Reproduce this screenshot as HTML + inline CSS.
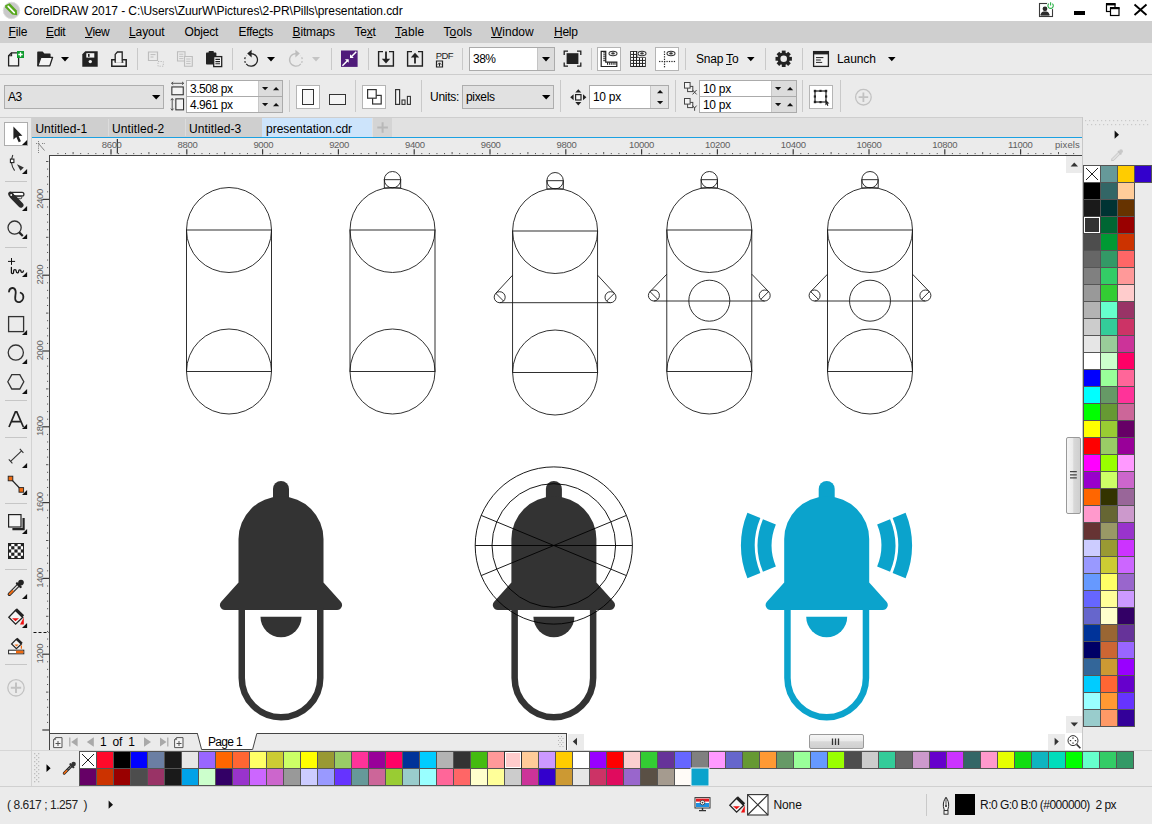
<!DOCTYPE html>
<html><head><meta charset="utf-8"><title>CorelDRAW</title>
<style>
html,body{margin:0;padding:0;}
body{width:1152px;height:824px;overflow:hidden;background:#ebebeb;font-family:"Liberation Sans", sans-serif;position:relative;}
.b{position:absolute;box-sizing:border-box;display:block;}
.t{position:absolute;white-space:pre;font-family:"Liberation Sans", sans-serif;}
u{text-decoration:underline;text-underline-offset:1px;}
</style></head><body>
<div class="b" style="left:0px;top:0px;width:1152px;height:21px;background:#ffffff;"></div>
<div class="b" style="left:0px;top:21px;width:1152px;height:22px;background:#cfcfcf;"></div>
<div class="b" style="left:0px;top:43px;width:1152px;height:31px;background:#ebebeb;"></div>
<div class="b" style="left:0px;top:74px;width:1152px;height:1px;background:#cdcdcd;"></div>
<div class="b" style="left:0px;top:75px;width:1152px;height:42px;background:#ebebeb;"></div>
<div class="b" style="left:0px;top:117px;width:1152px;height:1px;background:#cecece;"></div>
<div class="b" style="left:0px;top:118px;width:32px;height:706px;background:#ebebeb;"></div>
<div class="b" style="left:32px;top:118px;width:1050px;height:19px;background:#e1e1e1;"></div>
<div class="b" style="left:32px;top:137px;width:1050px;height:1.3px;background:#1ba1e2;"></div>
<div class="b" style="left:32px;top:138.3px;width:1050px;height:17px;background:#ebebeb;"></div>
<div class="b" style="left:32px;top:155px;width:18px;height:578px;background:#ebebeb;"></div>
<div class="b" style="left:49px;top:155px;width:1017px;height:578px;background:#ffffff;border-left:1px solid #444;border-top:1px solid #444;"></div>
<div class="b" style="left:1066px;top:155px;width:16px;height:595px;background:#ffffff;border-top:1px solid #444;"></div>
<div class="b" style="left:50px;top:733px;width:1016px;height:17px;background:#ffffff;"></div>
<div class="b" style="left:1082px;top:117px;width:70px;height:634px;background:#ebebeb;border-left:1px solid #c8c8c8;"></div>
<div class="b" style="left:0px;top:750px;width:1152px;height:1px;background:#d6d6d6;"></div>
<div class="b" style="left:0px;top:751px;width:1152px;height:35px;background:#ebebeb;"></div>
<div class="b" style="left:0px;top:786px;width:1152px;height:1px;background:#d0d0d0;"></div>
<div class="b" style="left:0px;top:787px;width:1152px;height:37px;background:#ebebeb;"></div>
<svg class="b" style="left:2px;top:1px;" width="19" height="19" viewBox="0 0 19 19"><circle cx="9.5" cy="9.5" r="8.2" fill="#c9c9c9"/><circle cx="9.5" cy="9.5" r="8.2" fill="none" stroke="#dcdcdc" stroke-width="1"/><path d="M3.2 4.2L7.8 2.2L14.8 9.5L15.2 14.2L10.2 13.6L3.2 6.6Z" fill="#57a81c"/><path d="M6.2 5.4L12.3 11.6" stroke="#fff" stroke-width="1.6" stroke-linecap="round"/></svg>
<span id="t1" class="t" style="left:24px;top:3px;font-size:12px;line-height:16px;color:#000;letter-spacing:-0.074px;">CorelDRAW 2017 - C:\Users\ZuurW\Pictures\2-PR\Pills\presentation.cdr</span>
<svg class="b" style="left:1038px;top:2px;" width="17" height="16" viewBox="0 0 17 16"><rect x="1.5" y="1.5" width="13" height="13" fill="#fff" stroke="#3a3a3a" stroke-width="1.1"/><circle cx="7" cy="6.8" r="2.4" fill="#2b2b2b"/><path d="M2.6 13.2C3 9.8 5 9.6 7 9.6S11 9.8 11.4 13.2Z" fill="#2b2b2b"/><rect x="2.6" y="12.2" width="8.8" height="1.3" fill="#2b2b2b"/><circle cx="12.6" cy="3.4" r="3.9" fill="#fff"/><path d="M10.9 1.6A2.7 2.7 0 1 0 14.3 1.6" fill="none" stroke="#2db34a" stroke-width="1.1"/><path d="M12.6 0.2V3.4" stroke="#2db34a" stroke-width="1.1"/></svg>
<div class="b" style="left:1074px;top:11px;width:11px;height:4px;background:#000;"></div>
<svg class="b" style="left:1105px;top:2px;" width="16" height="16" viewBox="0 0 16 16"><rect x="1.5" y="2" width="8.5" height="7.5" fill="#fff" stroke="#000" stroke-width="1.2"/><rect x="1" y="1" width="9.5" height="2.4" fill="#000"/><rect x="5.5" y="6" width="8.5" height="7.5" fill="#fff" stroke="#000" stroke-width="1.2"/><rect x="5" y="5" width="9.5" height="2.2" fill="#000"/></svg>
<svg class="b" style="left:1133px;top:3px;" width="16" height="14" viewBox="0 0 16 14"><path d="M1.5 1.5L13.5 12M13.5 1.5L1.5 12" stroke="#000" stroke-width="1.9" fill="none"/></svg>
<span id="t2" class="t" style="left:8.5px;top:24px;font-size:12px;line-height:16px;color:#000;letter-spacing:-0.125px;"><u>F</u>ile</span>
<span id="t3" class="t" style="left:46px;top:24px;font-size:12px;line-height:16px;color:#000;letter-spacing:-0.375px;"><u>E</u>dit</span>
<span id="t4" class="t" style="left:85px;top:24px;font-size:12px;line-height:16px;color:#000;letter-spacing:-0.375px;"><u>V</u>iew</span>
<span id="t5" class="t" style="left:129px;top:24px;font-size:12px;line-height:16px;color:#000;letter-spacing:-0.083px;"><u>L</u>ayout</span>
<span id="t6" class="t" style="left:184.5px;top:24px;font-size:12px;line-height:16px;color:#000;letter-spacing:-0.167px;">Ob<u>j</u>ect</span>
<span id="t7" class="t" style="left:238.5px;top:24px;font-size:12px;line-height:16px;color:#000;letter-spacing:-0.286px;">Effe<u>c</u>ts</span>
<span id="t8" class="t" style="left:292.5px;top:24px;font-size:12px;line-height:16px;color:#000;letter-spacing:-0.143px;"><u>B</u>itmaps</span>
<span id="t9" class="t" style="left:354.5px;top:24px;font-size:12px;line-height:16px;color:#000;letter-spacing:-0.25px;">Te<u>x</u>t</span>
<span id="t10" class="t" style="left:395px;top:24px;font-size:12px;line-height:16px;color:#000;letter-spacing:0.1px;"><u>T</u>able</span>
<span id="t11" class="t" style="left:443.5px;top:24px;font-size:12px;line-height:16px;color:#000;letter-spacing:0.1px;">T<u>o</u>ols</span>
<span id="t12" class="t" style="left:491px;top:24px;font-size:12px;line-height:16px;color:#000;letter-spacing:0.0px;"><u>W</u>indow</span>
<span id="t13" class="t" style="left:554px;top:24px;font-size:12px;line-height:16px;color:#000;letter-spacing:-0.25px;"><u>H</u>elp</span>
<svg class="b" style="left:7px;top:50px;" width="19" height="18" viewBox="0 0 19 18"><path d="M4.6 2.8H11.6V15.9H1.6V5.8Z" fill="#f4f4f4" stroke="#222" stroke-width="1.3" stroke-linejoin="round"/><path d="M4.6 2.8V5.8H1.6" fill="none" stroke="#222" stroke-width="1.1"/><rect x="10" y="1" width="7" height="7" fill="#0f9b2e"/><path d="M13.5 2.3V6.7M11.3 4.5H15.7" stroke="#fff" stroke-width="1.3"/></svg>
<svg class="b" style="left:36px;top:50px;" width="19" height="18" viewBox="0 0 19 18"><path d="M1.2 16V2.6C1.2 2 1.6 1.6 2.2 1.6H6.6L8.4 3.6H13.6C14.2 3.6 14.6 4 14.6 4.6V7H4.8L1.8 16Z" fill="#222"/><path d="M4.9 7.3H16.6L13.8 15.9H1.9Z" fill="#f4f4f4" stroke="#222" stroke-width="1.3" stroke-linejoin="round"/></svg>
<svg class="b" style="left:61.2px;top:57px;" width="9" height="5.4" viewBox="0 0 9 5.4"><path d="M0 0H8L4.0 4.4Z" fill="#000"/></svg>
<svg class="b" style="left:82px;top:51px;" width="17" height="16" viewBox="0 0 17 16"><path d="M0.3 3.3L3.3 0.3H15.7V15.7H0.3Z" fill="#222"/><rect x="4.3" y="2.2" width="8" height="4.4" fill="#f4f4f4"/><rect x="6" y="3" width="1.6" height="2.8" fill="#222"/><circle cx="8.3" cy="10.6" r="1.7" fill="#f4f4f4"/></svg>
<svg class="b" style="left:110px;top:51px;" width="18" height="16" viewBox="0 0 18 16"><path d="M1.8 8.8H16.2V15.2H1.8Z" fill="#f4f4f4" stroke="#222" stroke-width="1.5"/><path d="M4.6 11.2H13.4" stroke="#222" stroke-width="1.2"/><path d="M5.2 11V3.4L7.4 1H12.2V11" fill="#f4f4f4" stroke="#222" stroke-width="1.3"/><path d="M5.9 10.4H11.5V11.8H5.9Z" fill="#f4f4f4"/></svg>
<div class="b" style="left:137px;top:48px;width:1px;height:22px;background:#c9c9c9;"></div>
<svg class="b" style="left:147px;top:51px;" width="18" height="16" viewBox="0 0 18 16"><path d="M1.5 1H10.5V9.5H1.5Z" fill="none" stroke="#bdbdbd" stroke-width="1.2"/><path d="M3.5 3.6H8.5M3.5 6H6.5" stroke="#bdbdbd" stroke-width="1"/><path d="M11 10.5H16.3V15.2H11Z" fill="none" stroke="#bdbdbd" stroke-width="1" stroke-dasharray="1.3 1.2"/></svg>
<svg class="b" style="left:176px;top:51px;" width="18" height="16" viewBox="0 0 18 16"><path d="M1.5 0.8H9V10H1.5Z" fill="#ebebeb" stroke="#bdbdbd" stroke-width="1.1"/><path d="M3.2 3.2H7.4M3.2 5.4H7.4M3.2 7.6H7.4" stroke="#bdbdbd" stroke-width="0.9"/><path d="M8.5 5.5H16.3V15.3H8.5Z" fill="#ebebeb" stroke="#bdbdbd" stroke-width="1.1"/><path d="M10.2 8H14.6M10.2 10.3H14.6M10.2 12.6H14.6" stroke="#bdbdbd" stroke-width="0.9"/></svg>
<svg class="b" style="left:205px;top:50px;" width="18" height="18" viewBox="0 0 18 18"><rect x="1" y="2.6" width="10.4" height="12" rx="0.8" fill="#222"/><rect x="3.6" y="1" width="5.2" height="3" rx="0.8" fill="#222"/><rect x="8.7" y="6.6" width="8" height="10" fill="#f4f4f4" stroke="#222" stroke-width="1.3"/><path d="M10.4 9.4H15M10.4 11.6H15M10.4 13.8H15" stroke="#222" stroke-width="1.1"/></svg>
<div class="b" style="left:232px;top:48px;width:1px;height:22px;background:#c9c9c9;"></div>
<svg class="b" style="left:241px;top:49px;" width="20" height="21" viewBox="0 0 20 21"><path d="M10 4.6A6.3 6.3 0 1 1 5.2 14.8" fill="none" stroke="#222" stroke-width="1.25"/><path d="M4.4 13.8A6.3 6.3 0 0 1 5.5 6.6" fill="none" stroke="#222" stroke-width="1.25" stroke-dasharray="1.8 1.9"/><path d="M10.6 0.8V8.4L6.2 4.6Z" fill="#222"/></svg>
<svg class="b" style="left:267px;top:57px;" width="9" height="5.4" viewBox="0 0 9 5.4"><path d="M0 0H8L4.0 4.4Z" fill="#000"/></svg>
<svg class="b" style="left:286px;top:49px;" width="20" height="21" viewBox="0 0 20 21"><path d="M10 4.6A6.3 6.3 0 1 0 14.8 14.8" fill="none" stroke="#bdbdbd" stroke-width="1.25"/><path d="M15.6 13.8A6.3 6.3 0 0 0 14.5 6.6" fill="none" stroke="#bdbdbd" stroke-width="1.25" stroke-dasharray="1.8 1.9"/><path d="M9.4 0.8V8.4L13.8 4.6Z" fill="#bdbdbd"/></svg>
<svg class="b" style="left:312.4px;top:57px;" width="9" height="5.4" viewBox="0 0 9 5.4"><path d="M0 0H8L4.0 4.4Z" fill="#c4c4c4"/></svg>
<div class="b" style="left:331px;top:48px;width:1px;height:22px;background:#c9c9c9;"></div>
<svg class="b" style="left:341px;top:50px;" width="17" height="17" viewBox="0 0 17 17"><rect x="0" y="0.5" width="16.6" height="16.4" fill="#4f1b7a"/><path d="M15.3 1.8L9.8 7.3M1.4 15.7L6.9 10.2" stroke="#fff" stroke-width="1.5"/><path d="M9 4.2V8H12.8ZM7.7 12.8V9.2H3.9Z" fill="#fff"/></svg>
<div class="b" style="left:368px;top:48px;width:1px;height:22px;background:#c9c9c9;"></div>
<svg class="b" style="left:377px;top:50px;" width="18" height="18" viewBox="0 0 18 18"><path d="M6 1.6H1.6V16H16.4V1.6H12" fill="none" stroke="#222" stroke-width="1.4"/><path d="M9 1.6V11" stroke="#222" stroke-width="1.8"/><path d="M4.8 8.8H13.2L9 13.6Z" fill="#222"/></svg>
<svg class="b" style="left:406px;top:50px;" width="18" height="18" viewBox="0 0 18 18"><path d="M6 1.6H1.6V16H16.4V1.6H12" fill="none" stroke="#222" stroke-width="1.4"/><path d="M9 13.6V5.4" stroke="#222" stroke-width="1.8"/><path d="M4.8 7.6H13.2L9 2.8Z" fill="#222"/></svg>
<span id="t14" class="t" style="left:435.8px;top:48.5px;font-size:9.5px;line-height:13.5px;color:#222;letter-spacing:-0.667px;">PDF</span>
<svg class="b" style="left:435px;top:60px;" width="10" height="8" viewBox="0 0 10 8"><path d="M1.5 1H7.5V7H1.5Z" fill="none" stroke="#222" stroke-width="1.2"/><path d="M4.5 6.4V3.2M2.9 4.6L4.5 2.8L6.1 4.6" stroke="#222" stroke-width="1" fill="none"/></svg>
<div class="b" style="left:462px;top:48px;width:1px;height:22px;background:#c9c9c9;"></div>
<div class="b" style="left:469px;top:47px;width:86px;height:24px;background:#ffffff;border:1px solid #ababab;"></div>
<div class="b" style="left:537px;top:48px;width:17px;height:22px;background:#dcdcdc;border-left:1px solid #c4c4c4;"></div>
<span id="t15" class="t" style="left:473px;top:51px;font-size:12px;line-height:16px;color:#000;letter-spacing:-0.5px;">38%</span>
<svg class="b" style="left:541.6px;top:57px;" width="9" height="5.4" viewBox="0 0 9 5.4"><path d="M0 0H8L4.0 4.4Z" fill="#000"/></svg>
<svg class="b" style="left:563px;top:50px;" width="19" height="18" viewBox="0 0 19 18"><rect x="3.6" y="3.2" width="11.8" height="10.8" fill="#222"/><path d="M1.2 5V1.2H5M14 1.2H17.8V5M17.8 12.4V16.2H14M5 16.2H1.2V12.4" fill="none" stroke="#222" stroke-width="1.3"/></svg>
<div class="b" style="left:591px;top:48px;width:1px;height:22px;background:#c9c9c9;"></div>
<div class="b" style="left:597px;top:47px;width:24px;height:24px;background:#ffffff;border:1px solid #b5b5b5;"></div>
<svg class="b" style="left:598px;top:48px;" width="22" height="22" viewBox="0 0 22 22"><path d="M3.2 3.3H7.75V14.2H18.8V18.5H3.2Z" fill="#fff" stroke="#222" stroke-width="1.2"/><path d="M5.2 4.90H7.7M5.2 6.85H7.7M5.2 8.80H7.7M5.2 10.75H7.7M5.2 12.70H7.7M9.50 14.3V16.8M11.37 14.3V16.8M13.24 14.3V16.8M15.11 14.3V16.8M16.98 14.3V16.8" stroke="#222" stroke-width="1" fill="none"/><ellipse cx="15" cy="5.4" rx="4" ry="2.25" fill="#fff" stroke="#333" stroke-width="1.05"/><ellipse cx="15" cy="5.4" rx="1.7" ry="1.2" fill="#3a3a3a"/></svg>
<svg class="b" style="left:629px;top:48px;" width="20" height="22" viewBox="0 0 20 22"><path d="M1.2 3.1H8.4V9.3H16.8V18.9H1.2Z" fill="#222"/><g fill="#fff"><rect x="2.0" y="3.9" width="2" height="2"/><rect x="5.0" y="3.9" width="2" height="2"/><rect x="2.0" y="6.9" width="2" height="2"/><rect x="5.0" y="6.9" width="2" height="2"/><rect x="2.0" y="9.9" width="2" height="2"/><rect x="5.0" y="9.9" width="2" height="2"/><rect x="8.0" y="9.9" width="2" height="2"/><rect x="11.0" y="9.9" width="2" height="2"/><rect x="14.0" y="9.9" width="2" height="2"/><rect x="2.0" y="12.9" width="2" height="2"/><rect x="5.0" y="12.9" width="2" height="2"/><rect x="8.0" y="12.9" width="2" height="2"/><rect x="11.0" y="12.9" width="2" height="2"/><rect x="14.0" y="12.9" width="2" height="2"/><rect x="2.0" y="15.9" width="2" height="2"/><rect x="5.0" y="15.9" width="2" height="2"/><rect x="8.0" y="15.9" width="2" height="2"/><rect x="11.0" y="15.9" width="2" height="2"/><rect x="14.0" y="15.9" width="2" height="2"/></g><ellipse cx="13" cy="5.4" rx="5.1" ry="3.3" fill="#ebebeb"/><ellipse cx="13" cy="5.4" rx="4" ry="2.25" fill="#fff" stroke="#333" stroke-width="1.05"/><ellipse cx="13" cy="5.4" rx="1.7" ry="1.2" fill="#3a3a3a"/></svg>
<div class="b" style="left:655px;top:47px;width:24px;height:24px;background:#ffffff;border:1px solid #b5b5b5;"></div>
<svg class="b" style="left:656px;top:48px;" width="22" height="22" viewBox="0 0 22 22"><g fill="#222"><rect x="7.9" y="3.30" width="1.2" height="1.25"/><rect x="7.9" y="5.76" width="1.2" height="1.25"/><rect x="7.9" y="8.22" width="1.2" height="1.25"/><rect x="7.9" y="10.68" width="1.2" height="1.25"/><rect x="7.9" y="13.14" width="1.2" height="1.25"/><rect x="7.9" y="15.60" width="1.2" height="1.25"/><rect x="7.9" y="18.06" width="1.2" height="1.25"/><rect x="3.10" y="12.9" width="1.25" height="1.2"/><rect x="5.55" y="12.9" width="1.25" height="1.2"/><rect x="8.00" y="12.9" width="1.25" height="1.2"/><rect x="10.45" y="12.9" width="1.25" height="1.2"/><rect x="12.90" y="12.9" width="1.25" height="1.2"/><rect x="15.35" y="12.9" width="1.25" height="1.2"/><rect x="17.80" y="12.9" width="1.25" height="1.2"/></g><ellipse cx="15" cy="5.4" rx="4" ry="2.25" fill="#fff" stroke="#333" stroke-width="1.05"/><ellipse cx="15" cy="5.4" rx="1.7" ry="1.2" fill="#3a3a3a"/></svg>
<div class="b" style="left:685px;top:48px;width:1px;height:22px;background:#c9c9c9;"></div>
<span id="t16" class="t" style="left:696px;top:51px;font-size:12px;line-height:16px;color:#000;letter-spacing:-0.214px;">Snap <u>T</u>o</span>
<svg class="b" style="left:747px;top:57px;" width="8.6" height="5.2" viewBox="0 0 8.6 5.2"><path d="M0 0H7.6L3.8 4.2Z" fill="#000"/></svg>
<div class="b" style="left:765px;top:48px;width:1px;height:22px;background:#c9c9c9;"></div>
<svg class="b" style="left:774px;top:49px;" width="20" height="20" viewBox="0 0 20 20"><g transform="translate(9.7 9.8)" fill="#222"><rect x="-1.9" y="-8.2" width="3.8" height="4" transform="rotate(0)"/><rect x="-1.9" y="-8.2" width="3.8" height="4" transform="rotate(45)"/><rect x="-1.9" y="-8.2" width="3.8" height="4" transform="rotate(90)"/><rect x="-1.9" y="-8.2" width="3.8" height="4" transform="rotate(135)"/><rect x="-1.9" y="-8.2" width="3.8" height="4" transform="rotate(180)"/><rect x="-1.9" y="-8.2" width="3.8" height="4" transform="rotate(225)"/><rect x="-1.9" y="-8.2" width="3.8" height="4" transform="rotate(270)"/><rect x="-1.9" y="-8.2" width="3.8" height="4" transform="rotate(315)"/><circle r="6.2"/><circle r="3.3" fill="#ebebeb"/></g></svg>
<div class="b" style="left:802px;top:48px;width:1px;height:22px;background:#c9c9c9;"></div>
<svg class="b" style="left:812px;top:50px;" width="18" height="18" viewBox="0 0 18 18"><rect x="1.6" y="1.6" width="14.8" height="14.8" fill="#f4f4f4" stroke="#222" stroke-width="1.3"/><rect x="1.6" y="1.6" width="14.8" height="2.8" fill="#222"/><path d="M4 7.6H11.4M4 10H8.8M4 12.4H10.2" stroke="#222" stroke-width="1"/></svg>
<span id="t17" class="t" style="left:837px;top:51px;font-size:12px;line-height:16px;color:#000;letter-spacing:-0.083px;">Launch</span>
<svg class="b" style="left:888px;top:57px;" width="8.6" height="5.2" viewBox="0 0 8.6 5.2"><path d="M0 0H7.6L3.8 4.2Z" fill="#000"/></svg>
<div class="b" style="left:4px;top:85px;width:160px;height:24px;background:#e1e1e1;border:1px solid #adadad;"></div>
<span id="t18" class="t" style="left:8px;top:89px;font-size:12px;line-height:16px;color:#000;letter-spacing:-0.5px;">A3</span>
<svg class="b" style="left:151.6px;top:94.5px;" width="9.4" height="5.6" viewBox="0 0 9.4 5.6"><path d="M0 0H8.4L4.2 4.6Z" fill="#000"/></svg>
<svg class="b" style="left:170px;top:81px;" width="16" height="15" viewBox="0 0 16 15"><rect x="1.85" y="5.95" width="11.4" height="7.8" fill="#f4f4f4" stroke="#333" stroke-width="1.1"/><path d="M1.6 2.3H13.6" stroke="#444" stroke-width="0.9"/><path d="M3.2 0.9L1.5 2.3L3.2 3.7M12 0.9L13.7 2.3L12 3.7" fill="none" stroke="#444" stroke-width="0.9"/></svg>
<svg class="b" style="left:170px;top:97px;" width="16" height="15" viewBox="0 0 16 15"><rect x="5.85" y="1.85" width="7.7" height="11" fill="#f4f4f4" stroke="#333" stroke-width="1.1"/><path d="M2.2 1.6V13.2" stroke="#444" stroke-width="0.9"/><path d="M0.8 3.2L2.2 1.5L3.6 3.2M0.8 11.6L2.2 13.3L3.6 11.6" fill="none" stroke="#444" stroke-width="0.9"/></svg>
<div class="b" style="left:186px;top:80px;width:97px;height:17px;background:#ffffff;border:1px solid #ababab;"></div>
<div class="b" style="left:258px;top:81px;width:24px;height:15px;background:#dcdcdc;border-left:1px solid #c8c8c8;"></div>
<span id="t19" class="t" style="left:190px;top:80.5px;font-size:12px;line-height:16px;color:#000;letter-spacing:-0.45px;">3.508 px</span>
<svg class="b" style="left:261.9px;top:86.9px;" width="8" height="5" viewBox="0 0 8 5"><path d="M0 0H6.2L3.1 3.3Z" fill="#111"/></svg>
<svg class="b" style="left:273.4px;top:86.7px;" width="8" height="5" viewBox="0 0 8 5"><path d="M0 3.3H6.2L3.1 0Z" fill="#111"/></svg>
<div class="b" style="left:186px;top:96px;width:97px;height:17px;background:#ffffff;border:1px solid #ababab;"></div>
<div class="b" style="left:258px;top:97px;width:24px;height:15px;background:#dcdcdc;border-left:1px solid #c8c8c8;"></div>
<span id="t20" class="t" style="left:190px;top:96.5px;font-size:12px;line-height:16px;color:#000;letter-spacing:-0.45px;">4.961 px</span>
<svg class="b" style="left:261.9px;top:102.9px;" width="8" height="5" viewBox="0 0 8 5"><path d="M0 0H6.2L3.1 3.3Z" fill="#111"/></svg>
<svg class="b" style="left:273.4px;top:102.7px;" width="8" height="5" viewBox="0 0 8 5"><path d="M0 3.3H6.2L3.1 0Z" fill="#111"/></svg>
<div class="b" style="left:289px;top:80px;width:1px;height:32px;background:#c9c9c9;"></div>
<div class="b" style="left:296px;top:85px;width:24px;height:24px;background:#ffffff;border:1px solid #b5b5b5;"></div>
<div class="b" style="left:302px;top:89px;width:12px;height:16px;background:#f7f7f7;border:1.3px solid #333;"></div>
<div class="b" style="left:328.5px;top:94px;width:17px;height:11px;background:#f4f4f4;border:1.3px solid #333;"></div>
<div class="b" style="left:355px;top:80px;width:1px;height:32px;background:#c9c9c9;"></div>
<div class="b" style="left:362px;top:85px;width:24px;height:24px;background:#ffffff;border:1px solid #b5b5b5;"></div>
<svg class="b" style="left:366px;top:88px;" width="17" height="18" viewBox="0 0 17 18"><rect x="6.6" y="7.4" width="8.6" height="8.6" fill="#fff" stroke="#333" stroke-width="1.2"/><rect x="1.6" y="1.6" width="8.6" height="8.6" fill="#fff" stroke="#333" stroke-width="1.2"/></svg>
<svg class="b" style="left:394px;top:88px;" width="18" height="18" viewBox="0 0 18 18"><rect x="1.6" y="1.6" width="4" height="14.8" fill="#f4f4f4" stroke="#333" stroke-width="1.2"/><rect x="8" y="12" width="3" height="4.4" fill="#f4f4f4" stroke="#333" stroke-width="1.1"/><rect x="13.4" y="8.4" width="3" height="8" fill="#f4f4f4" stroke="#333" stroke-width="1.1"/></svg>
<div class="b" style="left:421px;top:80px;width:1px;height:32px;background:#c9c9c9;"></div>
<span id="t21" class="t" style="left:430px;top:89px;font-size:12px;line-height:16px;color:#000;letter-spacing:-0.25px;">Units:</span>
<div class="b" style="left:462px;top:85px;width:92px;height:24px;background:#e1e1e1;border:1px solid #adadad;"></div>
<span id="t22" class="t" style="left:466px;top:89px;font-size:12px;line-height:16px;color:#000;letter-spacing:-0.333px;">pixels</span>
<svg class="b" style="left:541.8px;top:94.5px;" width="9.4" height="5.6" viewBox="0 0 9.4 5.6"><path d="M0 0H8.4L4.2 4.6Z" fill="#000"/></svg>
<div class="b" style="left:560px;top:80px;width:1px;height:32px;background:#c9c9c9;"></div>
<svg class="b" style="left:570px;top:89px;" width="17" height="17" viewBox="0 0 17 17"><rect x="5.6" y="5.6" width="5.4" height="5.4" fill="#f4f4f4" stroke="#222" stroke-width="1.2"/><path d="M8.3 0.2L11.3 3.6H5.3ZM8.3 16.4L11.3 13H5.3ZM0.2 8.3L3.6 5.3V11.3ZM16.4 8.3L13 5.3V11.3Z" fill="#222"/></svg>
<div class="b" style="left:589px;top:85px;width:80px;height:24px;background:#ffffff;border:1px solid #ababab;"></div>
<div class="b" style="left:650px;top:86px;width:18px;height:22px;background:#e4e4e4;border-left:1px solid #c8c8c8;"></div>
<span id="t23" class="t" style="left:593px;top:89px;font-size:12px;line-height:16px;color:#000;letter-spacing:-0.3px;">10 px</span>
<svg class="b" style="left:656.9px;top:90.4px;" width="8" height="5" viewBox="0 0 8 5"><path d="M0 3.3H6.2L3.1 0Z" fill="#111"/></svg>
<svg class="b" style="left:656.9px;top:100.8px;" width="8" height="5" viewBox="0 0 8 5"><path d="M0 0H6.2L3.1 3.3Z" fill="#111"/></svg>
<div class="b" style="left:675px;top:80px;width:1px;height:32px;background:#c9c9c9;"></div>
<svg class="b" style="left:683px;top:81px;" width="16" height="15" viewBox="0 0 16 15"><rect x="4.6" y="5.4" width="5.2" height="5.2" fill="#f4f4f4" stroke="#444" stroke-width="1"/><rect x="1.5" y="1.5" width="5.6" height="5.6" fill="#f4f4f4" stroke="#444" stroke-width="1"/><path d="M9.6 9L13.6 13.4M13.6 9L9.6 13.4" stroke="#444" stroke-width="1"/></svg>
<svg class="b" style="left:683px;top:97px;" width="16" height="15" viewBox="0 0 16 15"><rect x="4.6" y="5.4" width="5.2" height="5.2" fill="#f4f4f4" stroke="#444" stroke-width="1"/><rect x="1.5" y="1.5" width="5.6" height="5.6" fill="#f4f4f4" stroke="#444" stroke-width="1"/><path d="M9.6 8.6L11.6 11L13.6 8.6M11.6 11V13.8" stroke="#444" stroke-width="1" fill="none"/></svg>
<div class="b" style="left:699px;top:80px;width:98px;height:17px;background:#ffffff;border:1px solid #ababab;"></div>
<div class="b" style="left:771px;top:81px;width:25px;height:15px;background:#dcdcdc;border-left:1px solid #c8c8c8;"></div>
<span id="t24" class="t" style="left:703px;top:80.5px;font-size:12px;line-height:16px;color:#000;letter-spacing:-0.3px;">10 px</span>
<svg class="b" style="left:774.9px;top:86.9px;" width="8" height="5" viewBox="0 0 8 5"><path d="M0 0H6.2L3.1 3.3Z" fill="#111"/></svg>
<svg class="b" style="left:787.4px;top:86.7px;" width="8" height="5" viewBox="0 0 8 5"><path d="M0 3.3H6.2L3.1 0Z" fill="#111"/></svg>
<div class="b" style="left:699px;top:96px;width:98px;height:17px;background:#ffffff;border:1px solid #ababab;"></div>
<div class="b" style="left:771px;top:97px;width:25px;height:15px;background:#dcdcdc;border-left:1px solid #c8c8c8;"></div>
<span id="t25" class="t" style="left:703px;top:96.5px;font-size:12px;line-height:16px;color:#000;letter-spacing:-0.3px;">10 px</span>
<svg class="b" style="left:774.9px;top:102.9px;" width="8" height="5" viewBox="0 0 8 5"><path d="M0 0H6.2L3.1 3.3Z" fill="#111"/></svg>
<svg class="b" style="left:787.4px;top:102.7px;" width="8" height="5" viewBox="0 0 8 5"><path d="M0 3.3H6.2L3.1 0Z" fill="#111"/></svg>
<div class="b" style="left:802px;top:80px;width:1px;height:32px;background:#c9c9c9;"></div>
<div class="b" style="left:809px;top:85px;width:24px;height:24px;background:#ffffff;border:1px solid #b5b5b5;"></div>
<svg class="b" style="left:812px;top:88px;" width="19" height="19" viewBox="0 0 19 19"><rect x="3" y="3" width="11" height="11" fill="none" stroke="#222" stroke-width="1.2"/><g fill="#222"><rect x="1.8" y="1.8" width="2.4" height="2.4"/><rect x="12.8" y="1.8" width="2.4" height="2.4"/><rect x="1.8" y="12.8" width="2.4" height="2.4"/><rect x="7.4" y="1.8" width="2.2" height="2.2"/><rect x="7.4" y="13" width="2.2" height="2.2"/><rect x="1.8" y="7.4" width="2.2" height="2.2"/><rect x="13" y="7.4" width="2.2" height="2.2"/><path d="M13.4 11.4L17.4 15.6L15.6 15.6L16.4 17.6L15.4 18L14.6 16.2L13.4 17.4Z"/></g></svg>
<div class="b" style="left:840px;top:80px;width:1px;height:32px;background:#c9c9c9;"></div>
<svg class="b" style="left:854px;top:88px;" width="19" height="19" viewBox="0 0 19 19"><circle cx="9.4" cy="9.2" r="7.8" fill="none" stroke="#c2c2c2" stroke-width="1.3"/><path d="M9.4 4.4V14M4.6 9.2H14.2" stroke="#c2c2c2" stroke-width="1.8"/></svg>
<div class="b" style="left:32px;top:118px;width:1050px;height:19px;background:#e1e1e1;"></div>
<div class="b" style="left:32px;top:118px;width:230px;height:19px;background:#cfcfcf;"></div>
<div class="b" style="left:108px;top:119px;width:1px;height:17px;background:#dcdcdc;"></div>
<div class="b" style="left:185px;top:119px;width:1px;height:17px;background:#dcdcdc;"></div>
<div class="b" style="left:262px;top:118px;width:110px;height:19px;background:#cde4fb;"></div>
<div class="b" style="left:373px;top:118px;width:19px;height:19px;background:#d4d4d4;"></div>
<span id="t26" class="t" style="left:35.4px;top:120.5px;font-size:12px;line-height:16px;color:#000;letter-spacing:0.04px;">Untitled-1</span>
<span id="t27" class="t" style="left:112px;top:120.5px;font-size:12px;line-height:16px;color:#000;letter-spacing:0.1px;">Untitled-2</span>
<span id="t28" class="t" style="left:189px;top:120.5px;font-size:12px;line-height:16px;color:#000;letter-spacing:0.1px;">Untitled-3</span>
<span id="t29" class="t" style="left:266px;top:120.5px;font-size:12px;line-height:16px;color:#000;letter-spacing:0.0px;">presentation.cdr</span>
<svg class="b" style="left:376px;top:121px;" width="13" height="13" viewBox="0 0 13 13"><path d="M6.6 1.2V11.8M1.3 6.5H11.9" stroke="#b8b8b8" stroke-width="2"/></svg>
<svg class="b" style="left:0px;top:0px;" width="1152" height="824" viewBox="0 0 1152 824"><rect x="57.44" y="153" width="1" height="1.1" fill="#555"/><rect x="65.02" y="153" width="1" height="1.1" fill="#555"/><rect x="72.60" y="152" width="1" height="2.2" fill="#555"/><rect x="80.18" y="153" width="1" height="1.1" fill="#555"/><rect x="87.76" y="153" width="1" height="1.1" fill="#555"/><rect x="95.34" y="153" width="1" height="1.1" fill="#555"/><rect x="102.92" y="153" width="1" height="1.1" fill="#555"/><rect x="110.40" y="149.2" width="1.2" height="5.3" fill="#3a3a3a"/><rect x="118.08" y="153" width="1" height="1.1" fill="#555"/><rect x="125.66" y="153" width="1" height="1.1" fill="#555"/><rect x="133.24" y="153" width="1" height="1.1" fill="#555"/><rect x="140.82" y="153" width="1" height="1.1" fill="#555"/><rect x="148.40" y="152" width="1" height="2.2" fill="#555"/><rect x="155.98" y="153" width="1" height="1.1" fill="#555"/><rect x="163.56" y="153" width="1" height="1.1" fill="#555"/><rect x="171.14" y="153" width="1" height="1.1" fill="#555"/><rect x="178.72" y="153" width="1" height="1.1" fill="#555"/><rect x="186.20" y="149.2" width="1.2" height="5.3" fill="#3a3a3a"/><rect x="193.88" y="153" width="1" height="1.1" fill="#555"/><rect x="201.46" y="153" width="1" height="1.1" fill="#555"/><rect x="209.04" y="153" width="1" height="1.1" fill="#555"/><rect x="216.62" y="153" width="1" height="1.1" fill="#555"/><rect x="224.20" y="152" width="1" height="2.2" fill="#555"/><rect x="231.78" y="153" width="1" height="1.1" fill="#555"/><rect x="239.36" y="153" width="1" height="1.1" fill="#555"/><rect x="246.94" y="153" width="1" height="1.1" fill="#555"/><rect x="254.52" y="153" width="1" height="1.1" fill="#555"/><rect x="262.00" y="149.2" width="1.2" height="5.3" fill="#3a3a3a"/><rect x="269.68" y="153" width="1" height="1.1" fill="#555"/><rect x="277.26" y="153" width="1" height="1.1" fill="#555"/><rect x="284.84" y="153" width="1" height="1.1" fill="#555"/><rect x="292.42" y="153" width="1" height="1.1" fill="#555"/><rect x="300.00" y="152" width="1" height="2.2" fill="#555"/><rect x="307.58" y="153" width="1" height="1.1" fill="#555"/><rect x="315.16" y="153" width="1" height="1.1" fill="#555"/><rect x="322.74" y="153" width="1" height="1.1" fill="#555"/><rect x="330.32" y="153" width="1" height="1.1" fill="#555"/><rect x="337.80" y="149.2" width="1.2" height="5.3" fill="#3a3a3a"/><rect x="345.48" y="153" width="1" height="1.1" fill="#555"/><rect x="353.06" y="153" width="1" height="1.1" fill="#555"/><rect x="360.64" y="153" width="1" height="1.1" fill="#555"/><rect x="368.22" y="153" width="1" height="1.1" fill="#555"/><rect x="375.80" y="152" width="1" height="2.2" fill="#555"/><rect x="383.38" y="153" width="1" height="1.1" fill="#555"/><rect x="390.96" y="153" width="1" height="1.1" fill="#555"/><rect x="398.54" y="153" width="1" height="1.1" fill="#555"/><rect x="406.12" y="153" width="1" height="1.1" fill="#555"/><rect x="413.60" y="149.2" width="1.2" height="5.3" fill="#3a3a3a"/><rect x="421.28" y="153" width="1" height="1.1" fill="#555"/><rect x="428.86" y="153" width="1" height="1.1" fill="#555"/><rect x="436.44" y="153" width="1" height="1.1" fill="#555"/><rect x="444.02" y="153" width="1" height="1.1" fill="#555"/><rect x="451.60" y="152" width="1" height="2.2" fill="#555"/><rect x="459.18" y="153" width="1" height="1.1" fill="#555"/><rect x="466.76" y="153" width="1" height="1.1" fill="#555"/><rect x="474.34" y="153" width="1" height="1.1" fill="#555"/><rect x="481.92" y="153" width="1" height="1.1" fill="#555"/><rect x="489.40" y="149.2" width="1.2" height="5.3" fill="#3a3a3a"/><rect x="497.08" y="153" width="1" height="1.1" fill="#555"/><rect x="504.66" y="153" width="1" height="1.1" fill="#555"/><rect x="512.24" y="153" width="1" height="1.1" fill="#555"/><rect x="519.82" y="153" width="1" height="1.1" fill="#555"/><rect x="527.40" y="152" width="1" height="2.2" fill="#555"/><rect x="534.98" y="153" width="1" height="1.1" fill="#555"/><rect x="542.56" y="153" width="1" height="1.1" fill="#555"/><rect x="550.14" y="153" width="1" height="1.1" fill="#555"/><rect x="557.72" y="153" width="1" height="1.1" fill="#555"/><rect x="565.20" y="149.2" width="1.2" height="5.3" fill="#3a3a3a"/><rect x="572.88" y="153" width="1" height="1.1" fill="#555"/><rect x="580.46" y="153" width="1" height="1.1" fill="#555"/><rect x="588.04" y="153" width="1" height="1.1" fill="#555"/><rect x="595.62" y="153" width="1" height="1.1" fill="#555"/><rect x="603.20" y="152" width="1" height="2.2" fill="#555"/><rect x="610.78" y="153" width="1" height="1.1" fill="#555"/><rect x="618.36" y="153" width="1" height="1.1" fill="#555"/><rect x="625.94" y="153" width="1" height="1.1" fill="#555"/><rect x="633.52" y="153" width="1" height="1.1" fill="#555"/><rect x="641.00" y="149.2" width="1.2" height="5.3" fill="#3a3a3a"/><rect x="648.68" y="153" width="1" height="1.1" fill="#555"/><rect x="656.26" y="153" width="1" height="1.1" fill="#555"/><rect x="663.84" y="153" width="1" height="1.1" fill="#555"/><rect x="671.42" y="153" width="1" height="1.1" fill="#555"/><rect x="679.00" y="152" width="1" height="2.2" fill="#555"/><rect x="686.58" y="153" width="1" height="1.1" fill="#555"/><rect x="694.16" y="153" width="1" height="1.1" fill="#555"/><rect x="701.74" y="153" width="1" height="1.1" fill="#555"/><rect x="709.32" y="153" width="1" height="1.1" fill="#555"/><rect x="716.80" y="149.2" width="1.2" height="5.3" fill="#3a3a3a"/><rect x="724.48" y="153" width="1" height="1.1" fill="#555"/><rect x="732.06" y="153" width="1" height="1.1" fill="#555"/><rect x="739.64" y="153" width="1" height="1.1" fill="#555"/><rect x="747.22" y="153" width="1" height="1.1" fill="#555"/><rect x="754.80" y="152" width="1" height="2.2" fill="#555"/><rect x="762.38" y="153" width="1" height="1.1" fill="#555"/><rect x="769.96" y="153" width="1" height="1.1" fill="#555"/><rect x="777.54" y="153" width="1" height="1.1" fill="#555"/><rect x="785.12" y="153" width="1" height="1.1" fill="#555"/><rect x="792.60" y="149.2" width="1.2" height="5.3" fill="#3a3a3a"/><rect x="800.28" y="153" width="1" height="1.1" fill="#555"/><rect x="807.86" y="153" width="1" height="1.1" fill="#555"/><rect x="815.44" y="153" width="1" height="1.1" fill="#555"/><rect x="823.02" y="153" width="1" height="1.1" fill="#555"/><rect x="830.60" y="152" width="1" height="2.2" fill="#555"/><rect x="838.18" y="153" width="1" height="1.1" fill="#555"/><rect x="845.76" y="153" width="1" height="1.1" fill="#555"/><rect x="853.34" y="153" width="1" height="1.1" fill="#555"/><rect x="860.92" y="153" width="1" height="1.1" fill="#555"/><rect x="868.40" y="149.2" width="1.2" height="5.3" fill="#3a3a3a"/><rect x="876.08" y="153" width="1" height="1.1" fill="#555"/><rect x="883.66" y="153" width="1" height="1.1" fill="#555"/><rect x="891.24" y="153" width="1" height="1.1" fill="#555"/><rect x="898.82" y="153" width="1" height="1.1" fill="#555"/><rect x="906.40" y="152" width="1" height="2.2" fill="#555"/><rect x="913.98" y="153" width="1" height="1.1" fill="#555"/><rect x="921.56" y="153" width="1" height="1.1" fill="#555"/><rect x="929.14" y="153" width="1" height="1.1" fill="#555"/><rect x="936.72" y="153" width="1" height="1.1" fill="#555"/><rect x="944.20" y="149.2" width="1.2" height="5.3" fill="#3a3a3a"/><rect x="951.88" y="153" width="1" height="1.1" fill="#555"/><rect x="959.46" y="153" width="1" height="1.1" fill="#555"/><rect x="967.04" y="153" width="1" height="1.1" fill="#555"/><rect x="974.62" y="153" width="1" height="1.1" fill="#555"/><rect x="982.20" y="152" width="1" height="2.2" fill="#555"/><rect x="989.78" y="153" width="1" height="1.1" fill="#555"/><rect x="997.36" y="153" width="1" height="1.1" fill="#555"/><rect x="1004.94" y="153" width="1" height="1.1" fill="#555"/><rect x="1012.52" y="153" width="1" height="1.1" fill="#555"/><rect x="1020.00" y="149.2" width="1.2" height="5.3" fill="#3a3a3a"/><rect x="1027.68" y="153" width="1" height="1.1" fill="#555"/><rect x="1035.26" y="153" width="1" height="1.1" fill="#555"/><rect x="1042.84" y="153" width="1" height="1.1" fill="#555"/><rect x="1050.42" y="153" width="1" height="1.1" fill="#555"/><rect x="1058.00" y="152" width="1" height="2.2" fill="#555"/><rect x="1065.58" y="153" width="1" height="1.1" fill="#555"/><rect x="1073.16" y="153" width="1" height="1.1" fill="#555"/><rect x="46" y="161.00" width="2.4" height="1" fill="#555"/><rect x="47" y="168.58" width="1.1" height="1" fill="#555"/><rect x="47" y="176.16" width="1.1" height="1" fill="#555"/><rect x="47" y="183.74" width="1.1" height="1" fill="#555"/><rect x="47" y="191.32" width="1.1" height="1" fill="#555"/><rect x="42.3" y="198.80" width="6.7" height="1.2" fill="#3a3a3a"/><rect x="47" y="206.48" width="1.1" height="1" fill="#555"/><rect x="47" y="214.06" width="1.1" height="1" fill="#555"/><rect x="47" y="221.64" width="1.1" height="1" fill="#555"/><rect x="47" y="229.22" width="1.1" height="1" fill="#555"/><rect x="46" y="236.80" width="2.4" height="1" fill="#555"/><rect x="47" y="244.38" width="1.1" height="1" fill="#555"/><rect x="47" y="251.96" width="1.1" height="1" fill="#555"/><rect x="47" y="259.54" width="1.1" height="1" fill="#555"/><rect x="47" y="267.12" width="1.1" height="1" fill="#555"/><rect x="42.3" y="274.60" width="6.7" height="1.2" fill="#3a3a3a"/><rect x="47" y="282.28" width="1.1" height="1" fill="#555"/><rect x="47" y="289.86" width="1.1" height="1" fill="#555"/><rect x="47" y="297.44" width="1.1" height="1" fill="#555"/><rect x="47" y="305.02" width="1.1" height="1" fill="#555"/><rect x="46" y="312.60" width="2.4" height="1" fill="#555"/><rect x="47" y="320.18" width="1.1" height="1" fill="#555"/><rect x="47" y="327.76" width="1.1" height="1" fill="#555"/><rect x="47" y="335.34" width="1.1" height="1" fill="#555"/><rect x="47" y="342.92" width="1.1" height="1" fill="#555"/><rect x="42.3" y="350.40" width="6.7" height="1.2" fill="#3a3a3a"/><rect x="47" y="358.08" width="1.1" height="1" fill="#555"/><rect x="47" y="365.66" width="1.1" height="1" fill="#555"/><rect x="47" y="373.24" width="1.1" height="1" fill="#555"/><rect x="47" y="380.82" width="1.1" height="1" fill="#555"/><rect x="46" y="388.40" width="2.4" height="1" fill="#555"/><rect x="47" y="395.98" width="1.1" height="1" fill="#555"/><rect x="47" y="403.56" width="1.1" height="1" fill="#555"/><rect x="47" y="411.14" width="1.1" height="1" fill="#555"/><rect x="47" y="418.72" width="1.1" height="1" fill="#555"/><rect x="42.3" y="426.20" width="6.7" height="1.2" fill="#3a3a3a"/><rect x="47" y="433.88" width="1.1" height="1" fill="#555"/><rect x="47" y="441.46" width="1.1" height="1" fill="#555"/><rect x="47" y="449.04" width="1.1" height="1" fill="#555"/><rect x="47" y="456.62" width="1.1" height="1" fill="#555"/><rect x="46" y="464.20" width="2.4" height="1" fill="#555"/><rect x="47" y="471.78" width="1.1" height="1" fill="#555"/><rect x="47" y="479.36" width="1.1" height="1" fill="#555"/><rect x="47" y="486.94" width="1.1" height="1" fill="#555"/><rect x="47" y="494.52" width="1.1" height="1" fill="#555"/><rect x="42.3" y="502.00" width="6.7" height="1.2" fill="#3a3a3a"/><rect x="47" y="509.68" width="1.1" height="1" fill="#555"/><rect x="47" y="517.26" width="1.1" height="1" fill="#555"/><rect x="47" y="524.84" width="1.1" height="1" fill="#555"/><rect x="47" y="532.42" width="1.1" height="1" fill="#555"/><rect x="46" y="540.00" width="2.4" height="1" fill="#555"/><rect x="47" y="547.58" width="1.1" height="1" fill="#555"/><rect x="47" y="555.16" width="1.1" height="1" fill="#555"/><rect x="47" y="562.74" width="1.1" height="1" fill="#555"/><rect x="47" y="570.32" width="1.1" height="1" fill="#555"/><rect x="42.3" y="577.80" width="6.7" height="1.2" fill="#3a3a3a"/><rect x="47" y="585.48" width="1.1" height="1" fill="#555"/><rect x="47" y="593.06" width="1.1" height="1" fill="#555"/><rect x="47" y="600.64" width="1.1" height="1" fill="#555"/><rect x="47" y="608.22" width="1.1" height="1" fill="#555"/><rect x="46" y="615.80" width="2.4" height="1" fill="#555"/><rect x="47" y="623.38" width="1.1" height="1" fill="#555"/><rect x="47" y="630.96" width="1.1" height="1" fill="#555"/><rect x="47" y="638.54" width="1.1" height="1" fill="#555"/><rect x="47" y="646.12" width="1.1" height="1" fill="#555"/><rect x="42.3" y="653.60" width="6.7" height="1.2" fill="#3a3a3a"/><rect x="47" y="661.28" width="1.1" height="1" fill="#555"/><rect x="47" y="668.86" width="1.1" height="1" fill="#555"/><rect x="47" y="676.44" width="1.1" height="1" fill="#555"/><rect x="47" y="684.02" width="1.1" height="1" fill="#555"/><rect x="46" y="691.60" width="2.4" height="1" fill="#555"/><rect x="47" y="699.18" width="1.1" height="1" fill="#555"/><rect x="47" y="706.76" width="1.1" height="1" fill="#555"/><rect x="47" y="714.34" width="1.1" height="1" fill="#555"/><rect x="47" y="721.92" width="1.1" height="1" fill="#555"/><rect x="42.3" y="729.40" width="6.7" height="1.2" fill="#3a3a3a"/><g stroke="#777" stroke-width="0.9" fill="none"><path d="M36 143.5H40M42 143.5H45M38.5 141V153" stroke-dasharray="1.2 1"/><path d="M38.5 143.5L44.5 150.5"/></g><path d="M117.3 139V153.5" stroke="#111" stroke-width="1"/><path d="M33.5 632.5H49" stroke="#111" stroke-width="1" stroke-dasharray="3 2"/></svg>
<span id="t30" class="t" style="left:101.8px;top:138px;font-size:9.5px;line-height:13.5px;color:#606060;letter-spacing:-0.35px;">8600</span>
<span id="t31" class="t" style="left:177.6px;top:138px;font-size:9.5px;line-height:13.5px;color:#606060;letter-spacing:-0.35px;">8800</span>
<span id="t32" class="t" style="left:253.4px;top:138px;font-size:9.5px;line-height:13.5px;color:#606060;letter-spacing:-0.35px;">9000</span>
<span id="t33" class="t" style="left:329.2px;top:138px;font-size:9.5px;line-height:13.5px;color:#606060;letter-spacing:-0.35px;">9200</span>
<span id="t34" class="t" style="left:405.0px;top:138px;font-size:9.5px;line-height:13.5px;color:#606060;letter-spacing:-0.35px;">9400</span>
<span id="t35" class="t" style="left:480.8px;top:138px;font-size:9.5px;line-height:13.5px;color:#606060;letter-spacing:-0.35px;">9600</span>
<span id="t36" class="t" style="left:556.6px;top:138px;font-size:9.5px;line-height:13.5px;color:#606060;letter-spacing:-0.35px;">9800</span>
<span id="t37" class="t" style="left:629.1px;top:138px;font-size:9.5px;line-height:13.5px;color:#606060;letter-spacing:-0.28px;">10000</span>
<span id="t38" class="t" style="left:704.9px;top:138px;font-size:9.5px;line-height:13.5px;color:#606060;letter-spacing:-0.28px;">10200</span>
<span id="t39" class="t" style="left:780.7px;top:138px;font-size:9.5px;line-height:13.5px;color:#606060;letter-spacing:-0.28px;">10400</span>
<span id="t40" class="t" style="left:856.5px;top:138px;font-size:9.5px;line-height:13.5px;color:#606060;letter-spacing:-0.28px;">10600</span>
<span id="t41" class="t" style="left:932.3px;top:138px;font-size:9.5px;line-height:13.5px;color:#606060;letter-spacing:-0.28px;">10800</span>
<span id="t42" class="t" style="left:1008.1px;top:138px;font-size:9.5px;line-height:13.5px;color:#606060;letter-spacing:-0.28px;">11000</span>
<span id="t43" class="t" style="left:1055px;top:138px;font-size:9.5px;line-height:13.5px;color:#606060;letter-spacing:0.083px;">pixels</span>
<span id="t44" class="t" style="left:0;top:0;font-size:9.5px;line-height:10px;color:#606060;letter-spacing:-0.375px;transform-origin:0 0;transform:translate(34.6px,208.7px) rotate(-90deg);">2400</span>
<span id="t45" class="t" style="left:0;top:0;font-size:9.5px;line-height:10px;color:#606060;letter-spacing:-0.375px;transform-origin:0 0;transform:translate(34.6px,284.5px) rotate(-90deg);">2200</span>
<span id="t46" class="t" style="left:0;top:0;font-size:9.5px;line-height:10px;color:#606060;letter-spacing:-0.375px;transform-origin:0 0;transform:translate(34.6px,360.3px) rotate(-90deg);">2000</span>
<span id="t47" class="t" style="left:0;top:0;font-size:9.5px;line-height:10px;color:#606060;letter-spacing:-0.375px;transform-origin:0 0;transform:translate(34.6px,436.1px) rotate(-90deg);">1800</span>
<span id="t48" class="t" style="left:0;top:0;font-size:9.5px;line-height:10px;color:#606060;letter-spacing:-0.375px;transform-origin:0 0;transform:translate(34.6px,511.9px) rotate(-90deg);">1600</span>
<span id="t49" class="t" style="left:0;top:0;font-size:9.5px;line-height:10px;color:#606060;letter-spacing:-0.375px;transform-origin:0 0;transform:translate(34.6px,587.7px) rotate(-90deg);">1400</span>
<span id="t50" class="t" style="left:0;top:0;font-size:9.5px;line-height:10px;color:#606060;letter-spacing:-0.375px;transform-origin:0 0;transform:translate(34.6px,663.5px) rotate(-90deg);">1200</span>
<div class="b" style="left:31px;top:118px;width:1px;height:668px;background:#d2d2d2;"></div>
<div class="b" style="left:4px;top:122px;width:24px;height:24px;background:#ffffff;border:1px solid #adadad;"></div>
<svg class="b" style="left:4px;top:122px;" width="24" height="24" viewBox="0 0 24 24"><path d="M9.4 4.4V17.6L12.3 14.9L14.7 20.2L16.9 19.2L14.6 14.1L18.4 13.8Z" fill="#222"/></svg>
<svg class="b" style="left:22.1px;top:140.2px;" width="6" height="6" viewBox="0 0 6 6"><path d="M5.1 0V5.1H0Z" fill="#111"/></svg>
<svg class="b" style="left:4px;top:150px;" width="26" height="26" viewBox="0 0 26 26"><path d="M8.8 5C6.6 10.4 7.2 15.8 10.6 20.6" fill="none" stroke="#333" stroke-width="1.1"/><rect x="6.4" y="9.1" width="3.5" height="3.5" fill="#fff" stroke="#222" stroke-width="1.1"/><path d="M13 14.2L19.8 17.4L16.5 20.8Z" fill="#333"/></svg>
<svg class="b" style="left:22.1px;top:169.2px;" width="6" height="6" viewBox="0 0 6 6"><path d="M5.1 0V5.1H0Z" fill="#111"/></svg>
<div class="b" style="left:5px;top:181px;width:22px;height:1px;background:#c6c6c6;"></div>
<svg class="b" style="left:5px;top:188px;" width="24" height="22" viewBox="0 0 24 22"><rect x="3.9" y="4.3" width="15" height="3.7" rx="1.85" fill="#fff" stroke="#2a2a2a" stroke-width="1.3"/><rect x="10.8" y="8.7" width="6" height="2" rx="1" fill="#fff" stroke="#2a2a2a" stroke-width="0.9"/><path d="M7 7.8L15.8 17" stroke="#2a2a2a" stroke-width="5.4" stroke-linecap="round"/><path d="M5.2 5.4L9 9.4" stroke="#2a2a2a" stroke-width="3.6" stroke-linecap="round"/><circle cx="6.2" cy="7" r="0.9" fill="#fff"/><path d="M9.6 6.2H16.6" stroke="#fff" stroke-width="1.3" stroke-linecap="round"/></svg>
<svg class="b" style="left:22.1px;top:206.0px;" width="6" height="6" viewBox="0 0 6 6"><path d="M5.1 0V5.1H0Z" fill="#111"/></svg>
<svg class="b" style="left:5px;top:218px;" width="24" height="22" viewBox="0 0 24 22"><circle cx="9.6" cy="9.6" r="6.6" fill="none" stroke="#333" stroke-width="1.3"/><path d="M14.2 14.4L17.8 18" stroke="#222" stroke-width="2.2"/></svg>
<svg class="b" style="left:22.1px;top:234.4px;" width="6" height="6" viewBox="0 0 6 6"><path d="M5.1 0V5.1H0Z" fill="#111"/></svg>
<div class="b" style="left:5px;top:247px;width:22px;height:1px;background:#c6c6c6;"></div>
<svg class="b" style="left:5px;top:254px;" width="24" height="24" viewBox="0 0 24 24"><path d="M6.5 4V10.9M3 7.4H10.1" stroke="#111" stroke-width="1"/><path d="M6.4 13.3V18.4C6.4 20 8.6 20 8.6 18.2V17C8.6 15.2 11.2 15.2 11.2 17C11.2 19.4 13.6 19.4 13.6 17.4C13.6 15.4 16 15.4 16 17.2C16 19 18 18.8 18.5 16.8" fill="none" stroke="#111" stroke-width="1.25" stroke-linecap="round"/></svg>
<svg class="b" style="left:22.1px;top:272.0px;" width="6" height="6" viewBox="0 0 6 6"><path d="M5.1 0V5.1H0Z" fill="#111"/></svg>
<svg class="b" style="left:5px;top:284px;" width="24" height="22" viewBox="0 0 24 22"><path d="M4 7.6C4.6 3.2 9.6 2.6 10.6 7C11.4 10.6 8.6 14.4 11.2 17.2C13.6 19.4 17.4 17.6 18.2 14.4C18.8 11.6 17.4 9.6 15.6 8.8" fill="none" stroke="#222" stroke-width="1.8" stroke-linecap="round"/></svg>
<svg class="b" style="left:5px;top:313px;" width="24" height="24" viewBox="0 0 24 24"><rect x="3.6" y="3.6" width="15" height="15" fill="none" stroke="#333" stroke-width="1.3"/></svg>
<svg class="b" style="left:22.1px;top:330.20000000000005px;" width="6" height="6" viewBox="0 0 6 6"><path d="M5.1 0V5.1H0Z" fill="#111"/></svg>
<svg class="b" style="left:5px;top:342px;" width="24" height="24" viewBox="0 0 24 24"><circle cx="10.8" cy="10.6" r="7.6" fill="none" stroke="#333" stroke-width="1.3"/></svg>
<svg class="b" style="left:22.1px;top:359.20000000000005px;" width="6" height="6" viewBox="0 0 6 6"><path d="M5.1 0V5.1H0Z" fill="#111"/></svg>
<svg class="b" style="left:5px;top:371px;" width="24" height="24" viewBox="0 0 24 24"><path d="M2.8 10.8L6.8 3.6H14.8L18.8 10.8L14.8 18H6.8Z" fill="none" stroke="#333" stroke-width="1.3"/></svg>
<svg class="b" style="left:22.1px;top:388.6px;" width="6" height="6" viewBox="0 0 6 6"><path d="M5.1 0V5.1H0Z" fill="#111"/></svg>
<div class="b" style="left:5px;top:400px;width:22px;height:1px;background:#c6c6c6;"></div>
<svg class="b" style="left:5px;top:408px;" width="24" height="22" viewBox="0 0 24 22"><path d="M4 19L10.4 3.8H11.8L18.4 19M6.4 13.6H15.8" fill="none" stroke="#222" stroke-width="1.7"/></svg>
<svg class="b" style="left:22.1px;top:424.20000000000005px;" width="6" height="6" viewBox="0 0 6 6"><path d="M5.1 0V5.1H0Z" fill="#111"/></svg>
<div class="b" style="left:5px;top:437px;width:22px;height:1px;background:#c6c6c6;"></div>
<svg class="b" style="left:5px;top:444px;" width="24" height="24" viewBox="0 0 24 24"><path d="M5.6 17.4L16.6 6.8" stroke="#333" stroke-width="1.1"/><path d="M3.8 15.4L7.4 19.4M14.8 4.8L18.4 8.8" stroke="#333" stroke-width="1.1"/></svg>
<svg class="b" style="left:22.1px;top:462.6px;" width="6" height="6" viewBox="0 0 6 6"><path d="M5.1 0V5.1H0Z" fill="#111"/></svg>
<svg class="b" style="left:5px;top:472px;" width="24" height="24" viewBox="0 0 24 24"><path d="M5.6 6.6L16.4 18" stroke="#222" stroke-width="1.3"/><rect x="3.2" y="4.2" width="4.6" height="4.6" fill="#ef6c12" stroke="#222" stroke-width="0.9"/><rect x="14" y="15.6" width="4.6" height="4.6" fill="#ef6c12" stroke="#222" stroke-width="0.9"/></svg>
<svg class="b" style="left:22.1px;top:490.20000000000005px;" width="6" height="6" viewBox="0 0 6 6"><path d="M5.1 0V5.1H0Z" fill="#111"/></svg>
<div class="b" style="left:5px;top:503px;width:22px;height:1px;background:#c6c6c6;"></div>
<svg class="b" style="left:5px;top:511px;" width="24" height="24" viewBox="0 0 24 24"><path d="M7.4 18.2H18.6V7" fill="none" stroke="#222" stroke-width="2.2"/><rect x="3.6" y="3.6" width="12.4" height="12.4" fill="#f4f4f4" stroke="#222" stroke-width="1.2"/></svg>
<svg class="b" style="left:22.1px;top:528.6px;" width="6" height="6" viewBox="0 0 6 6"><path d="M5.1 0V5.1H0Z" fill="#111"/></svg>
<svg class="b" style="left:8px;top:543px;" width="17" height="17" viewBox="0 0 17 17"><rect width="16" height="16" fill="#fff"/><rect x="0.0" y="0.0" width="3.2" height="3.2" fill="#222"/><rect x="0.0" y="6.4" width="3.2" height="3.2" fill="#222"/><rect x="0.0" y="12.8" width="3.2" height="3.2" fill="#222"/><rect x="3.2" y="3.2" width="3.2" height="3.2" fill="#222"/><rect x="3.2" y="9.600000000000001" width="3.2" height="3.2" fill="#222"/><rect x="6.4" y="0.0" width="3.2" height="3.2" fill="#222"/><rect x="6.4" y="6.4" width="3.2" height="3.2" fill="#222"/><rect x="6.4" y="12.8" width="3.2" height="3.2" fill="#222"/><rect x="9.600000000000001" y="3.2" width="3.2" height="3.2" fill="#222"/><rect x="9.600000000000001" y="9.600000000000001" width="3.2" height="3.2" fill="#222"/><rect x="12.8" y="0.0" width="3.2" height="3.2" fill="#222"/><rect x="12.8" y="6.4" width="3.2" height="3.2" fill="#222"/><rect x="12.8" y="12.8" width="3.2" height="3.2" fill="#222"/><rect x="0.5" y="0.5" width="15" height="15" fill="none" stroke="#222"/></svg>
<div class="b" style="left:5px;top:569px;width:22px;height:1px;background:#c6c6c6;"></div>
<svg class="b" style="left:5px;top:577px;" width="24" height="24" viewBox="0 0 24 24"><path d="M4.4 17.2L13.6 8" stroke="#222" stroke-width="3.6" stroke-linecap="round"/><path d="M4.6 17L13.2 8.4" stroke="#d8d8d8" stroke-width="1.5" stroke-linecap="round"/><path d="M4.5 17.1L7.6 14" stroke="#f06a10" stroke-width="1.9" stroke-linecap="round"/><path d="M12 6.4L15.6 10" stroke="#222" stroke-width="2.4" stroke-linecap="round"/><circle cx="16" cy="5.6" r="2.8" fill="#222"/></svg>
<svg class="b" style="left:22.1px;top:594.2px;" width="6" height="6" viewBox="0 0 6 6"><path d="M5.1 0V5.1H0Z" fill="#111"/></svg>
<svg class="b" style="left:5px;top:604px;" width="24" height="26" viewBox="0 0 24 26"><path d="M10.6 6.2L17.8 13.2L10.6 20.2L3.8 13.2Z" fill="#f4f4f4" stroke="#222" stroke-width="1.3"/><path d="M10.8 5.4L18 12.4" stroke="#222" stroke-width="3.2"/><path d="M7 14.2H14L10.5 17.2Z" fill="#ee1111"/><path d="M18.8 13.6V20.4H15Z" fill="#ee1111"/></svg>
<svg class="b" style="left:22.1px;top:623.2px;" width="6" height="6" viewBox="0 0 6 6"><path d="M5.1 0V5.1H0Z" fill="#111"/></svg>
<svg class="b" style="left:5px;top:634px;" width="24" height="26" viewBox="0 0 24 26"><path d="M11.4 5.2L16.4 10L11.4 14.6L6.6 10Z" fill="#f4f4f4" stroke="#222" stroke-width="1.2"/><path d="M11.6 4.6L16.8 9.6" stroke="#222" stroke-width="2.6"/><path d="M9.4 10.6H13.6L11.5 12.6Z" fill="#f06a10"/><path d="M16.4 11.4V14.8" stroke="#f06a10" stroke-width="1.2"/><rect x="3.6" y="16.2" width="15.2" height="3.6" fill="#fff" stroke="#222" stroke-width="1"/><rect x="11" y="16.7" width="7.3" height="2.6" fill="#f06a10"/></svg>
<div class="b" style="left:5px;top:664px;width:22px;height:1px;background:#c6c6c6;"></div>
<svg class="b" style="left:6px;top:678px;" width="20" height="20" viewBox="0 0 20 20"><circle cx="10" cy="9.8" r="8.2" fill="none" stroke="#c2c2c2" stroke-width="1.3"/><path d="M10 4.6V15M4.8 9.8H15.2" stroke="#c2c2c2" stroke-width="2"/></svg>
<div class="b" style="left:49px;top:733px;width:518px;height:17px;background:#ebebeb;border-top:1px solid #444;border-right:1px solid #444;border-left:1px solid #444;"></div>
<svg class="b" style="left:52px;top:735.8px;" width="12" height="13" viewBox="0 0 12 13"><path d="M3.6 1.6H10V11.6H1.6V3.6Z" fill="#f4f4f4" stroke="#555" stroke-width="1"/><path d="M3.6 1.6V3.6H1.6" fill="none" stroke="#555" stroke-width="0.8"/><path d="M6 5V10M3.5 7.5H8.5" stroke="#555" stroke-width="1"/></svg>
<svg class="b" style="left:69.2px;top:736.4px;" width="50" height="12" viewBox="0 0 50 12"><path d="M0.8 1.4V10.6" stroke="#a9a9a9" stroke-width="1.2"/><path d="M8.6 1.4V10.6L2.2 6Z" fill="#a9a9a9"/><path d="M24.8 1.2V10.8L17.8 6Z" fill="#a9a9a9"/></svg>
<span id="t51" class="t" style="left:100px;top:733.7px;font-size:12px;line-height:16px;color:#000;letter-spacing:-0.25px;">1  of  1</span>
<svg class="b" style="left:142px;top:736.4px;" width="30" height="12" viewBox="0 0 30 12"><path d="M2 1.2V10.8L9 6Z" fill="#a9a9a9"/><path d="M18 1.4V10.6L24.4 6Z" fill="#a9a9a9"/><path d="M25.8 1.4V10.6" stroke="#a9a9a9" stroke-width="1.2"/></svg>
<svg class="b" style="left:172.6px;top:735.8px;" width="12" height="13" viewBox="0 0 12 13"><path d="M3.6 1.6H10V11.6H1.6V3.6Z" fill="#f4f4f4" stroke="#555" stroke-width="1"/><path d="M3.6 1.6V3.6H1.6" fill="none" stroke="#555" stroke-width="0.8"/><path d="M6 5V10M3.5 7.5H8.5" stroke="#555" stroke-width="1"/></svg>
<svg class="b" style="left:194px;top:733px;" width="66" height="18" viewBox="0 0 66 18"><path d="M3.4 0.5L7.6 16.5H58.6L62.8 0.5" fill="#fff" stroke="#444" stroke-width="1"/><path d="M4 0.5H62.4" stroke="#fff" stroke-width="1.4"/></svg>
<span id="t52" class="t" style="left:208px;top:733.7px;font-size:12px;line-height:16px;color:#000;letter-spacing:-0.667px;">Page 1</span>
<svg class="b" style="left:558px;top:735px;" width="7" height="14" viewBox="0 0 7 14"><g fill="#b4b4b4"><rect x="0" y="1" width="1" height="1"/><rect x="3" y="1" width="1" height="1"/><rect x="1.5" y="3" width="1" height="1"/><rect x="4.5" y="3" width="1" height="1"/><rect x="0" y="5" width="1" height="1"/><rect x="3" y="5" width="1" height="1"/><rect x="1.5" y="7" width="1" height="1"/><rect x="4.5" y="7" width="1" height="1"/><rect x="0" y="9" width="1" height="1"/><rect x="3" y="9" width="1" height="1"/><rect x="1.5" y="11" width="1" height="1"/><rect x="4.5" y="11" width="1" height="1"/></g></svg>
<div class="b" style="left:568px;top:734px;width:16px;height:16px;background:#ebebeb;"></div>
<svg class="b" style="left:571px;top:737px;" width="8" height="10" viewBox="0 0 8 10"><path d="M6 0.8V8.4L1.8 4.6Z" fill="#333"/></svg>
<div class="b" style="left:809px;top:734px;width:55px;height:15px;background:#e3e3e3;border:1px solid #9a9a9a;border-radius:2px;background:linear-gradient(#f5f5f5 0%,#ebebeb 44%,#d8d8d8 52%,#cfcfcf 100%);"></div>
<svg class="b" style="left:831px;top:738px;" width="10" height="8" viewBox="0 0 10 8"><path d="M1.5 0.5V7M4.5 0.5V7M7.5 0.5V7" stroke="#333" stroke-width="1.3"/></svg>
<div class="b" style="left:1048px;top:734px;width:17px;height:16px;background:#ebebeb;"></div>
<svg class="b" style="left:1053px;top:737px;" width="8" height="10" viewBox="0 0 8 10"><path d="M1.6 0.8V8.4L5.8 4.6Z" fill="#333"/></svg>
<svg class="b" style="left:1066px;top:734px;" width="16" height="16" viewBox="0 0 16 16"><circle cx="7" cy="6.6" r="5" fill="#fff" stroke="#333" stroke-width="1"/><path d="M10.6 10.4L14.4 14.2" stroke="#333" stroke-width="1.6"/><g fill="#333"><rect x="6.4" y="3.4" width="1.2" height="1.4"/><rect x="6.4" y="8.4" width="1.2" height="1.4"/><rect x="3.8" y="6" width="1.4" height="1.2"/><rect x="8.8" y="6" width="1.4" height="1.2"/></g></svg>
<div class="b" style="left:1066px;top:156px;width:16px;height:17px;background:#ebebeb;"></div>
<svg class="b" style="left:1070px;top:162px;" width="9" height="6" viewBox="0 0 9 6"><path d="M0.6 4.6H8L4.3 0.6Z" fill="#333"/></svg>
<div class="b" style="left:1066px;top:716px;width:16px;height:17px;background:#ebebeb;"></div>
<svg class="b" style="left:1070px;top:722px;" width="9" height="6" viewBox="0 0 9 6"><path d="M0.6 0.6H8L4.3 4.6Z" fill="#333"/></svg>
<div class="b" style="left:1066px;top:437px;width:15px;height:77px;background:#e3e3e3;border:1px solid #9a9a9a;border-radius:2px;background:linear-gradient(90deg,#f5f5f5 0%,#ebebeb 44%,#d8d8d8 52%,#cfcfcf 100%);"></div>
<svg class="b" style="left:1069px;top:470px;" width="9" height="10" viewBox="0 0 9 10"><path d="M1 1.7H7.8M1 4.8H7.8M1 7.8H7.8" stroke="#444" stroke-width="1.2"/></svg>
<svg class="b" style="left:1085px;top:119.7px;" width="66" height="6" viewBox="0 0 66 6"><g fill="#c9c9c9"><rect x="0" y="0" width="1.2" height="1.2"/><rect x="2" y="4" width="1.2" height="1.2"/><rect x="4" y="0" width="1.2" height="1.2"/><rect x="6" y="4" width="1.2" height="1.2"/><rect x="8" y="0" width="1.2" height="1.2"/><rect x="10" y="4" width="1.2" height="1.2"/><rect x="12" y="0" width="1.2" height="1.2"/><rect x="14" y="4" width="1.2" height="1.2"/><rect x="16" y="0" width="1.2" height="1.2"/><rect x="18" y="4" width="1.2" height="1.2"/><rect x="20" y="0" width="1.2" height="1.2"/><rect x="22" y="4" width="1.2" height="1.2"/><rect x="24" y="0" width="1.2" height="1.2"/><rect x="26" y="4" width="1.2" height="1.2"/><rect x="28" y="0" width="1.2" height="1.2"/><rect x="30" y="4" width="1.2" height="1.2"/><rect x="32" y="0" width="1.2" height="1.2"/><rect x="34" y="4" width="1.2" height="1.2"/><rect x="36" y="0" width="1.2" height="1.2"/><rect x="38" y="4" width="1.2" height="1.2"/><rect x="40" y="0" width="1.2" height="1.2"/><rect x="42" y="4" width="1.2" height="1.2"/><rect x="44" y="0" width="1.2" height="1.2"/><rect x="46" y="4" width="1.2" height="1.2"/><rect x="48" y="0" width="1.2" height="1.2"/><rect x="50" y="4" width="1.2" height="1.2"/><rect x="52" y="0" width="1.2" height="1.2"/><rect x="54" y="4" width="1.2" height="1.2"/><rect x="56" y="0" width="1.2" height="1.2"/><rect x="58" y="4" width="1.2" height="1.2"/><rect x="60" y="0" width="1.2" height="1.2"/><rect x="62" y="4" width="1.2" height="1.2"/></g></svg>
<svg class="b" style="left:1114px;top:130px;" width="6" height="10" viewBox="0 0 6 10"><path d="M0.6 0.6V8.8L5 4.7Z" fill="#111"/></svg>
<svg class="b" style="left:1110px;top:148px;" width="14" height="14" viewBox="0 0 14 14"><path d="M1.4 12.6L2 10.6L8.6 4L10.4 5.8L3.8 12.4Z" fill="#dedede" stroke="#c0c0c0" stroke-width="0.8"/><path d="M8 3L11.4 6.4" stroke="#c4c4c4" stroke-width="1.6"/><circle cx="11" cy="3.2" r="1.9" fill="#c8c8c8"/></svg>
<svg class="b" style="left:34px;top:752.8px;" width="8" height="32" viewBox="0 0 8 32"><g fill="#bebebe"><rect x="0" y="0" width="1.3" height="1.3"/><rect x="4" y="0" width="1.3" height="1.3"/><rect x="2" y="2" width="1.3" height="1.3"/><rect x="0" y="4" width="1.3" height="1.3"/><rect x="4" y="4" width="1.3" height="1.3"/><rect x="2" y="6" width="1.3" height="1.3"/><rect x="0" y="8" width="1.3" height="1.3"/><rect x="4" y="8" width="1.3" height="1.3"/><rect x="2" y="10" width="1.3" height="1.3"/><rect x="0" y="12" width="1.3" height="1.3"/><rect x="4" y="12" width="1.3" height="1.3"/><rect x="2" y="14" width="1.3" height="1.3"/><rect x="0" y="16" width="1.3" height="1.3"/><rect x="4" y="16" width="1.3" height="1.3"/><rect x="2" y="18" width="1.3" height="1.3"/><rect x="0" y="20" width="1.3" height="1.3"/><rect x="4" y="20" width="1.3" height="1.3"/><rect x="2" y="22" width="1.3" height="1.3"/><rect x="0" y="24" width="1.3" height="1.3"/><rect x="4" y="24" width="1.3" height="1.3"/><rect x="2" y="26" width="1.3" height="1.3"/><rect x="0" y="28" width="1.3" height="1.3"/><rect x="4" y="28" width="1.3" height="1.3"/></g></svg>
<svg class="b" style="left:46.4px;top:764px;" width="6" height="10" viewBox="0 0 6 10"><path d="M0.5 0.3V8L4.6 4.15Z" fill="#000"/></svg>
<svg class="b" style="left:62px;top:761px;" width="15" height="15" viewBox="0 0 15 15"><path d="M2.2 12.2L9.6 4.8" stroke="#222" stroke-width="2.9" stroke-linecap="round"/><path d="M3 11.4L9.4 5" stroke="#e4e4e4" stroke-width="1" stroke-dasharray="1.3 0.9"/><path d="M2.2 12.2L4.5 9.9" stroke="#f06a10" stroke-width="1.6" stroke-linecap="round"/><path d="M8.4 3.2L11.4 6.2" stroke="#333" stroke-width="2.1" stroke-linecap="round"/><circle cx="11.6" cy="3" r="2.2" fill="#333"/></svg>
<span id="t53" class="t" style="left:7px;top:796.8px;font-size:12px;line-height:16px;color:#222;letter-spacing:-0.444px;">( 8.617 ; 1.257  )</span>
<svg class="b" style="left:108px;top:800px;" width="6" height="10" viewBox="0 0 6 10"><path d="M0.6 0.6V8.8L5 4.7Z" fill="#111"/></svg>
<svg class="b" style="left:694px;top:796px;" width="18" height="18" viewBox="0 0 18 18"><rect x="1" y="1.6" width="15" height="10.4" fill="#fff" stroke="#333" stroke-width="1"/><rect x="2" y="2.6" width="13" height="3" fill="#e31b23"/><rect x="2" y="7" width="13" height="4" fill="#1e90e0"/><circle cx="8.5" cy="6.6" r="2.3" fill="#fff" stroke="#333" stroke-width="0.8"/><circle cx="8.5" cy="6.6" r="0.9" fill="#333"/><path d="M5 14.6H12M8.5 12V14.6" stroke="#333" stroke-width="1.4"/></svg>
<svg class="b" style="left:726px;top:791.5px;" width="24" height="26" viewBox="0 0 24 26"><path d="M10.6 6.2L17.8 13.2L10.6 20.2L3.8 13.2Z" fill="#f4f4f4" stroke="#222" stroke-width="1.3"/><path d="M10.8 5.4L18 12.4" stroke="#222" stroke-width="3.2"/><path d="M7 14.2H14L10.5 17.2Z" fill="#ee1111"/><path d="M18.8 13.6V20.4H15Z" fill="#ee1111"/></svg>
<svg class="b" style="left:747px;top:794px;" width="22" height="22" viewBox="0 0 22 22"><rect x="0.6" y="0.6" width="20.4" height="20.4" fill="#fff" stroke="#333" stroke-width="1.1"/><path d="M0.6 0.6L21 21M21 0.6L0.6 21" stroke="#333" stroke-width="1.1"/></svg>
<span id="t54" class="t" style="left:773.5px;top:796.8px;font-size:12px;line-height:16px;color:#111;letter-spacing:-0.125px;">None</span>
<div class="b" style="left:926px;top:794px;width:1px;height:22px;background:#c9c9c9;"></div>
<svg class="b" style="left:940px;top:796px;" width="12" height="20" viewBox="0 0 12 20"><path d="M6 1.2C4 4 3 7 3.4 10.6L4.4 14.6H7.6L8.6 10.6C9 7 8 4 6 1.2Z" fill="#f4f4f4" stroke="#222" stroke-width="1"/><path d="M6 2V9" stroke="#222" stroke-width="0.8"/><circle cx="6" cy="10" r="1" fill="#222"/><rect x="4" y="14.6" width="4" height="3.6" fill="#f4f4f4" stroke="#222" stroke-width="0.9"/></svg>
<div class="b" style="left:955px;top:794px;width:20px;height:21px;background:#000;"></div>
<span id="t55" class="t" style="left:980px;top:796.8px;font-size:12px;line-height:16px;color:#111;letter-spacing:-0.519px;">R:0 G:0 B:0 (#000000)  2 px</span>
<svg class="b" style="left:79px;top:751px;" width="1055" height="35" viewBox="0 0 1055 35"><rect x="0.5" y="0.5" width="17" height="17" fill="#fff" stroke="#555555"/><path d="M3 3L15 15M15 3L3 15" stroke="#222" stroke-width="1" fill="none"/><rect x="17.5" y="0.5" width="17" height="17" fill="#ff0a2a" stroke="#555555"/><rect x="34.5" y="0.5" width="17" height="17" fill="#000000" stroke="#555555"/><rect x="51.5" y="0.5" width="17" height="17" fill="#0000ff" stroke="#555555"/><rect x="68.5" y="0.5" width="17" height="17" fill="#6b7fa3" stroke="#555555"/><rect x="85.5" y="0.5" width="17" height="17" fill="#1a1a1a" stroke="#555555"/><rect x="102.5" y="0.5" width="17" height="17" fill="#e6e6e6" stroke="#555555"/><rect x="119.5" y="0.5" width="17" height="17" fill="#9966ff" stroke="#555555"/><rect x="136.5" y="0.5" width="17" height="17" fill="#ff6600" stroke="#555555"/><rect x="153.5" y="0.5" width="17" height="17" fill="#ff6633" stroke="#555555"/><rect x="170.5" y="0.5" width="17" height="17" fill="#ffff66" stroke="#555555"/><rect x="187.5" y="0.5" width="17" height="17" fill="#cccc33" stroke="#555555"/><rect x="204.5" y="0.5" width="17" height="17" fill="#ccff66" stroke="#555555"/><rect x="221.5" y="0.5" width="17" height="17" fill="#ffff00" stroke="#555555"/><rect x="238.5" y="0.5" width="17" height="17" fill="#999933" stroke="#555555"/><rect x="255.5" y="0.5" width="17" height="17" fill="#99cc66" stroke="#555555"/><rect x="272.5" y="0.5" width="17" height="17" fill="#ff3399" stroke="#555555"/><rect x="289.5" y="0.5" width="17" height="17" fill="#990099" stroke="#555555"/><rect x="306.5" y="0.5" width="17" height="17" fill="#ff0066" stroke="#555555"/><rect x="323.5" y="0.5" width="17" height="17" fill="#003399" stroke="#555555"/><rect x="340.5" y="0.5" width="17" height="17" fill="#00ccff" stroke="#555555"/><rect x="357.5" y="0.5" width="17" height="17" fill="#b3b3b3" stroke="#555555"/><rect x="374.5" y="0.5" width="17" height="17" fill="#333333" stroke="#555555"/><rect x="391.5" y="0.5" width="17" height="17" fill="#44bb11" stroke="#555555"/><rect x="408.5" y="0.5" width="17" height="17" fill="#ff9999" stroke="#555555"/><rect x="425.5" y="0.5" width="17" height="17" fill="#ffcccc" stroke="#555555"/><rect x="442.5" y="0.5" width="17" height="17" fill="#ffcc99" stroke="#555555"/><rect x="459.5" y="0.5" width="17" height="17" fill="#cc99ff" stroke="#555555"/><rect x="476.5" y="0.5" width="17" height="17" fill="#ffcc00" stroke="#555555"/><rect x="493.5" y="0.5" width="17" height="17" fill="#ffffff" stroke="#555555"/><rect x="510.5" y="0.5" width="17" height="17" fill="#9900ff" stroke="#555555"/><rect x="527.5" y="0.5" width="17" height="17" fill="#ff0000" stroke="#555555"/><rect x="544.5" y="0.5" width="17" height="17" fill="#facfcf" stroke="#555555"/><rect x="561.5" y="0.5" width="17" height="17" fill="#33cc33" stroke="#555555"/><rect x="578.5" y="0.5" width="17" height="17" fill="#663399" stroke="#555555"/><rect x="595.5" y="0.5" width="17" height="17" fill="#6666ff" stroke="#555555"/><rect x="612.5" y="0.5" width="17" height="17" fill="#808080" stroke="#555555"/><rect x="629.5" y="0.5" width="17" height="17" fill="#ff99ff" stroke="#555555"/><rect x="646.5" y="0.5" width="17" height="17" fill="#6666cc" stroke="#555555"/><rect x="663.5" y="0.5" width="17" height="17" fill="#669933" stroke="#555555"/><rect x="680.5" y="0.5" width="17" height="17" fill="#ff9933" stroke="#555555"/><rect x="697.5" y="0.5" width="17" height="17" fill="#669966" stroke="#555555"/><rect x="714.5" y="0.5" width="17" height="17" fill="#99ff99" stroke="#555555"/><rect x="731.5" y="0.5" width="17" height="17" fill="#6699ff" stroke="#555555"/><rect x="748.5" y="0.5" width="17" height="17" fill="#99ff00" stroke="#555555"/><rect x="765.5" y="0.5" width="17" height="17" fill="#4d4d4d" stroke="#555555"/><rect x="782.5" y="0.5" width="17" height="17" fill="#cccccc" stroke="#555555"/><rect x="799.5" y="0.5" width="17" height="17" fill="#33cc99" stroke="#555555"/><rect x="816.5" y="0.5" width="17" height="17" fill="#666666" stroke="#555555"/><rect x="833.5" y="0.5" width="17" height="17" fill="#cc99cc" stroke="#555555"/><rect x="850.5" y="0.5" width="17" height="17" fill="#6600cc" stroke="#555555"/><rect x="867.5" y="0.5" width="17" height="17" fill="#cc33ff" stroke="#555555"/><rect x="884.5" y="0.5" width="17" height="17" fill="#336666" stroke="#555555"/><rect x="901.5" y="0.5" width="17" height="17" fill="#ff99cc" stroke="#555555"/><rect x="918.5" y="0.5" width="17" height="17" fill="#e6ff00" stroke="#555555"/><rect x="935.5" y="0.5" width="17" height="17" fill="#11dd11" stroke="#555555"/><rect x="952.5" y="0.5" width="17" height="17" fill="#0fb5c0" stroke="#555555"/><rect x="969.5" y="0.5" width="17" height="17" fill="#00ddbb" stroke="#555555"/><rect x="986.5" y="0.5" width="17" height="17" fill="#00ff00" stroke="#555555"/><rect x="1003.5" y="0.5" width="17" height="17" fill="#66ffcc" stroke="#555555"/><rect x="1020.5" y="0.5" width="17" height="17" fill="#33cc66" stroke="#555555"/><rect x="1037.5" y="0.5" width="17" height="17" fill="#339966" stroke="#555555"/><rect x="0.5" y="17.5" width="17" height="17" fill="#660066" stroke="#555555"/><rect x="17.5" y="17.5" width="17" height="17" fill="#cc3300" stroke="#555555"/><rect x="34.5" y="17.5" width="17" height="17" fill="#990000" stroke="#555555"/><rect x="51.5" y="17.5" width="17" height="17" fill="#4d4d4d" stroke="#555555"/><rect x="68.5" y="17.5" width="17" height="17" fill="#993366" stroke="#555555"/><rect x="85.5" y="17.5" width="17" height="17" fill="#1a1a1a" stroke="#555555"/><rect x="102.5" y="17.5" width="17" height="17" fill="#00a2e8" stroke="#555555"/><rect x="119.5" y="17.5" width="17" height="17" fill="#ccffcc" stroke="#555555"/><rect x="136.5" y="17.5" width="17" height="17" fill="#330066" stroke="#555555"/><rect x="153.5" y="17.5" width="17" height="17" fill="#9933cc" stroke="#555555"/><rect x="170.5" y="17.5" width="17" height="17" fill="#cc66ff" stroke="#555555"/><rect x="187.5" y="17.5" width="17" height="17" fill="#cc66cc" stroke="#555555"/><rect x="204.5" y="17.5" width="17" height="17" fill="#999999" stroke="#555555"/><rect x="221.5" y="17.5" width="17" height="17" fill="#ccccff" stroke="#555555"/><rect x="238.5" y="17.5" width="17" height="17" fill="#9999ff" stroke="#555555"/><rect x="255.5" y="17.5" width="17" height="17" fill="#6633ff" stroke="#555555"/><rect x="272.5" y="17.5" width="17" height="17" fill="#669999" stroke="#555555"/><rect x="289.5" y="17.5" width="17" height="17" fill="#cc6699" stroke="#555555"/><rect x="306.5" y="17.5" width="17" height="17" fill="#99cc33" stroke="#555555"/><rect x="323.5" y="17.5" width="17" height="17" fill="#99cccc" stroke="#555555"/><rect x="340.5" y="17.5" width="17" height="17" fill="#99ffff" stroke="#555555"/><rect x="357.5" y="17.5" width="17" height="17" fill="#ff6699" stroke="#555555"/><rect x="374.5" y="17.5" width="17" height="17" fill="#ff6666" stroke="#555555"/><rect x="391.5" y="17.5" width="17" height="17" fill="#ffffcc" stroke="#555555"/><rect x="408.5" y="17.5" width="17" height="17" fill="#ffff99" stroke="#555555"/><rect x="425.5" y="17.5" width="17" height="17" fill="#cccccc" stroke="#555555"/><rect x="442.5" y="17.5" width="17" height="17" fill="#cc3399" stroke="#555555"/><rect x="459.5" y="17.5" width="17" height="17" fill="#3300cc" stroke="#555555"/><rect x="476.5" y="17.5" width="17" height="17" fill="#cc9933" stroke="#555555"/><rect x="493.5" y="17.5" width="17" height="17" fill="#e6e6e6" stroke="#555555"/><rect x="510.5" y="17.5" width="17" height="17" fill="#cc3366" stroke="#555555"/><rect x="527.5" y="17.5" width="17" height="17" fill="#e00b5e" stroke="#555555"/><rect x="544.5" y="17.5" width="17" height="17" fill="#9966cc" stroke="#555555"/><rect x="561.5" y="17.5" width="17" height="17" fill="#5a5045" stroke="#555555"/><rect x="578.5" y="17.5" width="17" height="17" fill="#a59b8f" stroke="#555555"/><rect x="595.5" y="17.5" width="17" height="17" fill="#fffbf7" stroke="#555555"/><rect x="612.5" y="17.5" width="17" height="17" fill="#0ba3cc" stroke="#555555"/><rect x="425.5" y="0.5" width="17" height="17" fill="none" stroke="#333"/><rect x="426.5" y="1.5" width="15" height="15" fill="none" stroke="#fff"/><rect x="612" y="17" width="18" height="18" fill="#0ba3cc" stroke="#f4f4f4"/></svg>
<svg class="b" style="left:1083px;top:165px;" width="69" height="562" viewBox="0 0 69 562"><rect x="0.5" y="0.5" width="17" height="17" fill="#fff" stroke="#555555"/><path d="M3 3L15 15M15 3L3 15" stroke="#222" stroke-width="1" fill="none"/><rect x="0.5" y="17.5" width="17" height="17" fill="#000000" stroke="#555555"/><rect x="0.5" y="34.5" width="17" height="17" fill="#1a1a1a" stroke="#555555"/><rect x="0.5" y="51.5" width="17" height="17" fill="#333333" stroke="#555555"/><rect x="0.5" y="68.5" width="17" height="17" fill="#4d4d4d" stroke="#555555"/><rect x="0.5" y="85.5" width="17" height="17" fill="#666666" stroke="#555555"/><rect x="0.5" y="102.5" width="17" height="17" fill="#808080" stroke="#555555"/><rect x="0.5" y="119.5" width="17" height="17" fill="#999999" stroke="#555555"/><rect x="0.5" y="136.5" width="17" height="17" fill="#b3b3b3" stroke="#555555"/><rect x="0.5" y="153.5" width="17" height="17" fill="#cccccc" stroke="#555555"/><rect x="0.5" y="170.5" width="17" height="17" fill="#e6e6e6" stroke="#555555"/><rect x="0.5" y="187.5" width="17" height="17" fill="#ffffff" stroke="#555555"/><rect x="0.5" y="204.5" width="17" height="17" fill="#0000ff" stroke="#555555"/><rect x="0.5" y="221.5" width="17" height="17" fill="#00ffff" stroke="#555555"/><rect x="0.5" y="238.5" width="17" height="17" fill="#00ff00" stroke="#555555"/><rect x="0.5" y="255.5" width="17" height="17" fill="#ffff00" stroke="#555555"/><rect x="0.5" y="272.5" width="17" height="17" fill="#ff0000" stroke="#555555"/><rect x="0.5" y="289.5" width="17" height="17" fill="#ff00ff" stroke="#555555"/><rect x="0.5" y="306.5" width="17" height="17" fill="#9900cc" stroke="#555555"/><rect x="0.5" y="323.5" width="17" height="17" fill="#ff6600" stroke="#555555"/><rect x="0.5" y="340.5" width="17" height="17" fill="#ff99cc" stroke="#555555"/><rect x="0.5" y="357.5" width="17" height="17" fill="#663333" stroke="#555555"/><rect x="0.5" y="374.5" width="17" height="17" fill="#ccccff" stroke="#555555"/><rect x="0.5" y="391.5" width="17" height="17" fill="#9999ff" stroke="#555555"/><rect x="0.5" y="408.5" width="17" height="17" fill="#6699ff" stroke="#555555"/><rect x="0.5" y="425.5" width="17" height="17" fill="#6666ff" stroke="#555555"/><rect x="0.5" y="442.5" width="17" height="17" fill="#6666cc" stroke="#555555"/><rect x="0.5" y="459.5" width="17" height="17" fill="#003399" stroke="#555555"/><rect x="0.5" y="476.5" width="17" height="17" fill="#000066" stroke="#555555"/><rect x="0.5" y="493.5" width="17" height="17" fill="#336699" stroke="#555555"/><rect x="0.5" y="510.5" width="17" height="17" fill="#00ccff" stroke="#555555"/><rect x="0.5" y="527.5" width="17" height="17" fill="#99ffff" stroke="#555555"/><rect x="0.5" y="544.5" width="17" height="17" fill="#99cccc" stroke="#555555"/><rect x="17.5" y="0.5" width="17" height="17" fill="#669999" stroke="#555555"/><rect x="17.5" y="17.5" width="17" height="17" fill="#336666" stroke="#555555"/><rect x="17.5" y="34.5" width="17" height="17" fill="#003333" stroke="#555555"/><rect x="17.5" y="51.5" width="17" height="17" fill="#006633" stroke="#555555"/><rect x="17.5" y="68.5" width="17" height="17" fill="#009933" stroke="#555555"/><rect x="17.5" y="85.5" width="17" height="17" fill="#339966" stroke="#555555"/><rect x="17.5" y="102.5" width="17" height="17" fill="#33cc66" stroke="#555555"/><rect x="17.5" y="119.5" width="17" height="17" fill="#33cc33" stroke="#555555"/><rect x="17.5" y="136.5" width="17" height="17" fill="#66ffcc" stroke="#555555"/><rect x="17.5" y="153.5" width="17" height="17" fill="#33cc99" stroke="#555555"/><rect x="17.5" y="170.5" width="17" height="17" fill="#99cc99" stroke="#555555"/><rect x="17.5" y="187.5" width="17" height="17" fill="#ccffcc" stroke="#555555"/><rect x="17.5" y="204.5" width="17" height="17" fill="#99ff99" stroke="#555555"/><rect x="17.5" y="221.5" width="17" height="17" fill="#669966" stroke="#555555"/><rect x="17.5" y="238.5" width="17" height="17" fill="#669933" stroke="#555555"/><rect x="17.5" y="255.5" width="17" height="17" fill="#99cc33" stroke="#555555"/><rect x="17.5" y="272.5" width="17" height="17" fill="#99cc66" stroke="#555555"/><rect x="17.5" y="289.5" width="17" height="17" fill="#99ff00" stroke="#555555"/><rect x="17.5" y="306.5" width="17" height="17" fill="#ccff66" stroke="#555555"/><rect x="17.5" y="323.5" width="17" height="17" fill="#333300" stroke="#555555"/><rect x="17.5" y="340.5" width="17" height="17" fill="#666633" stroke="#555555"/><rect x="17.5" y="357.5" width="17" height="17" fill="#999966" stroke="#555555"/><rect x="17.5" y="374.5" width="17" height="17" fill="#999933" stroke="#555555"/><rect x="17.5" y="391.5" width="17" height="17" fill="#cccc33" stroke="#555555"/><rect x="17.5" y="408.5" width="17" height="17" fill="#ffff66" stroke="#555555"/><rect x="17.5" y="425.5" width="17" height="17" fill="#ffff99" stroke="#555555"/><rect x="17.5" y="442.5" width="17" height="17" fill="#ffffcc" stroke="#555555"/><rect x="17.5" y="459.5" width="17" height="17" fill="#996633" stroke="#555555"/><rect x="17.5" y="476.5" width="17" height="17" fill="#cc6633" stroke="#555555"/><rect x="17.5" y="493.5" width="17" height="17" fill="#cc9933" stroke="#555555"/><rect x="17.5" y="510.5" width="17" height="17" fill="#ff6633" stroke="#555555"/><rect x="17.5" y="527.5" width="17" height="17" fill="#ff9933" stroke="#555555"/><rect x="17.5" y="544.5" width="17" height="17" fill="#ff9966" stroke="#555555"/><rect x="34.5" y="0.5" width="17" height="17" fill="#ffcc00" stroke="#555555"/><rect x="34.5" y="17.5" width="17" height="17" fill="#ffcc99" stroke="#555555"/><rect x="34.5" y="34.5" width="17" height="17" fill="#663300" stroke="#555555"/><rect x="34.5" y="51.5" width="17" height="17" fill="#990000" stroke="#555555"/><rect x="34.5" y="68.5" width="17" height="17" fill="#cc3300" stroke="#555555"/><rect x="34.5" y="85.5" width="17" height="17" fill="#ff6666" stroke="#555555"/><rect x="34.5" y="102.5" width="17" height="17" fill="#ff9999" stroke="#555555"/><rect x="34.5" y="119.5" width="17" height="17" fill="#ffcccc" stroke="#555555"/><rect x="34.5" y="136.5" width="17" height="17" fill="#993366" stroke="#555555"/><rect x="34.5" y="153.5" width="17" height="17" fill="#cc3366" stroke="#555555"/><rect x="34.5" y="170.5" width="17" height="17" fill="#cc3399" stroke="#555555"/><rect x="34.5" y="187.5" width="17" height="17" fill="#ff0066" stroke="#555555"/><rect x="34.5" y="204.5" width="17" height="17" fill="#ff6699" stroke="#555555"/><rect x="34.5" y="221.5" width="17" height="17" fill="#ff3399" stroke="#555555"/><rect x="34.5" y="238.5" width="17" height="17" fill="#cc6699" stroke="#555555"/><rect x="34.5" y="255.5" width="17" height="17" fill="#660066" stroke="#555555"/><rect x="34.5" y="272.5" width="17" height="17" fill="#990099" stroke="#555555"/><rect x="34.5" y="289.5" width="17" height="17" fill="#ff99ff" stroke="#555555"/><rect x="34.5" y="306.5" width="17" height="17" fill="#cc66cc" stroke="#555555"/><rect x="34.5" y="323.5" width="17" height="17" fill="#996699" stroke="#555555"/><rect x="34.5" y="340.5" width="17" height="17" fill="#cc99cc" stroke="#555555"/><rect x="34.5" y="357.5" width="17" height="17" fill="#9933cc" stroke="#555555"/><rect x="34.5" y="374.5" width="17" height="17" fill="#cc33ff" stroke="#555555"/><rect x="34.5" y="391.5" width="17" height="17" fill="#cc66ff" stroke="#555555"/><rect x="34.5" y="408.5" width="17" height="17" fill="#9966cc" stroke="#555555"/><rect x="34.5" y="425.5" width="17" height="17" fill="#cc99ff" stroke="#555555"/><rect x="34.5" y="442.5" width="17" height="17" fill="#330066" stroke="#555555"/><rect x="34.5" y="459.5" width="17" height="17" fill="#663399" stroke="#555555"/><rect x="34.5" y="476.5" width="17" height="17" fill="#9966ff" stroke="#555555"/><rect x="34.5" y="493.5" width="17" height="17" fill="#9900ff" stroke="#555555"/><rect x="34.5" y="510.5" width="17" height="17" fill="#6600cc" stroke="#555555"/><rect x="34.5" y="527.5" width="17" height="17" fill="#6633ff" stroke="#555555"/><rect x="34.5" y="544.5" width="17" height="17" fill="#330099" stroke="#555555"/><rect x="51.5" y="0.5" width="17" height="17" fill="#3300cc" stroke="#555555"/><rect x="0.5" y="51.5" width="17" height="17" fill="none" stroke="#444"/><rect x="1.5" y="52.5" width="15" height="15" fill="none" stroke="#fff"/></svg>
<svg class="b" style="left:0px;top:0px;" width="1152" height="824" viewBox="0 0 1152 824"><g stroke="#1a1a1a" stroke-width="0.9" fill="none"><circle cx="229" cy="230" r="42.5"/><circle cx="229" cy="371.5" r="42.5"/><rect x="186.5" y="230" width="85.0" height="141.5"/></g><g stroke="#1a1a1a" stroke-width="0.9" fill="none"><circle cx="392.5" cy="230" r="42.5"/><circle cx="392.5" cy="371.5" r="42.5"/><rect x="350.0" y="230" width="85.0" height="141.5"/><circle cx="392.5" cy="179.7" r="8.2"/><rect x="384.3" y="179.7" width="16.4" height="8.3"/></g><g stroke="#1a1a1a" stroke-width="0.9" fill="none"><circle cx="555.1" cy="231" r="42.5"/><circle cx="555.1" cy="372.5" r="42.5"/><rect x="512.6" y="231" width="85.0" height="141.5"/><circle cx="555.1" cy="180.7" r="8.2"/><rect x="546.9" y="180.7" width="16.4" height="8.3"/><circle cx="499.70000000000005" cy="297.2" r="5.5"/><path d="M512.6 275.2L495.80000000000007 293.3"/><path d="M495.80000000000007 293.3L503.6 301.09999999999997"/><circle cx="610.5" cy="297.2" r="5.5"/><path d="M597.6 275.2L614.4 293.3"/><path d="M614.4 293.3L606.6 301.09999999999997"/><path d="M499.70000000000005 302.7L610.5 302.7"/></g><g stroke="#1a1a1a" stroke-width="0.9" fill="none"><circle cx="709.3" cy="230" r="42.5"/><circle cx="709.3" cy="371.5" r="42.5"/><rect x="666.8" y="230" width="85.0" height="141.5"/><circle cx="709.3" cy="179.7" r="8.2"/><rect x="701.0999999999999" y="179.7" width="16.4" height="8.3"/><circle cx="653.9" cy="295.5" r="5.5"/><path d="M666.8 274.2L650.0 291.6"/><path d="M650.0 291.6L657.8 299.4"/><circle cx="764.6999999999999" cy="295.5" r="5.5"/><path d="M751.8 274.2L768.5999999999999 291.6"/><path d="M768.5999999999999 291.6L760.8 299.4"/><path d="M653.9 301.0L764.6999999999999 301.0"/><circle cx="709.3" cy="300.7" r="20.5"/></g><g stroke="#1a1a1a" stroke-width="0.9" fill="none"><circle cx="870" cy="230" r="42.5"/><circle cx="870" cy="371.5" r="42.5"/><rect x="827.5" y="230" width="85.0" height="141.5"/><circle cx="870" cy="179.7" r="8.2"/><rect x="861.8" y="179.7" width="16.4" height="8.3"/><circle cx="814.6" cy="295.5" r="5.5"/><path d="M827.5 274.2L810.7 291.6"/><path d="M810.7 291.6L818.5 299.4"/><circle cx="925.4" cy="295.5" r="5.5"/><path d="M912.5 274.2L929.3 291.6"/><path d="M929.3 291.6L921.5 299.4"/><path d="M814.6 301.0L925.4 301.0"/><circle cx="870" cy="300.7" r="20.5"/></g><g fill="#333333"><path d="M273.0 502V489a8 8 0 0 1 16 0V502Z"/><path d="M238.5 539A42.5 42.5 0 0 1 323.5 539V582.5L340.8 601.7A5 5 0 0 1 337.1 610H224.9A5 5 0 0 1 221.2 601.7L238.5 582.5Z"/><path d="M260.5 616.7H301.5A20.5 20.5 0 0 1 260.5 616.7Z"/><path d="M241.75 608V678A39.25 39.25 0 0 0 320.25 678V608" fill="none" stroke="#333333" stroke-width="6.5"/></g><g fill="#333333"><path d="M545.9 502V489a8 8 0 0 1 16 0V502Z"/><path d="M511.4 539A42.5 42.5 0 0 1 596.4 539V582.5L613.6999999999999 601.7A5 5 0 0 1 610.0 610H497.79999999999995A5 5 0 0 1 494.09999999999997 601.7L511.4 582.5Z"/><path d="M533.4 616.7H574.4A20.5 20.5 0 0 1 533.4 616.7Z"/><path d="M514.65 608V678A39.25 39.25 0 0 0 593.15 678V608" fill="none" stroke="#333333" stroke-width="6.5"/></g><g fill="#0ba3cc"><path d="M818.7 502V489a8 8 0 0 1 16 0V502Z"/><path d="M784.2 539A42.5 42.5 0 0 1 869.2 539V582.5L886.5 601.7A5 5 0 0 1 882.8000000000001 610H770.6A5 5 0 0 1 766.9000000000001 601.7L784.2 582.5Z"/><path d="M806.2 616.7H847.2A20.5 20.5 0 0 1 806.2 616.7Z"/><path d="M787.45 608V678A39.25 39.25 0 0 0 865.95 678V608" fill="none" stroke="#0ba3cc" stroke-width="6.5"/></g><g stroke="#000" stroke-width="0.9" fill="none"><circle cx="553.8" cy="545.5" r="78.6"/><circle cx="553.8" cy="545.5" r="61.8"/><path d="M475.19999999999993 545.5H632.4"/><path d="M481.18 515.42L626.42 575.58"/><path d="M481.18 575.58L626.42 515.42"/></g><g stroke="#0ba3cc" stroke-width="14" fill="none"><path d="M899.12 515.42A78.6 78.6 0 0 1 899.12 575.58"/><path d="M753.88 515.42A78.6 78.6 0 0 0 753.88 575.58"/><path d="M883.60 521.85A61.8 61.8 0 0 1 883.60 569.15"/><path d="M769.40 521.85A61.8 61.8 0 0 0 769.40 569.15"/></g></svg>
</body></html>
